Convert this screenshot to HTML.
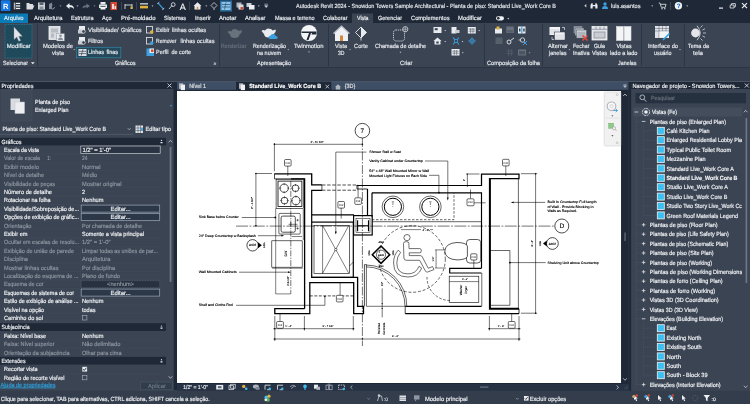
<!DOCTYPE html>
<html lang="pt"><head><meta charset="utf-8"><title>Autodesk Revit 2024 - Snowdon Towers Sample Architectural</title>
<style>
html,body{margin:0;padding:0;background:#3b4453;overflow:hidden}
svg{display:block;font-family:"Liberation Sans",sans-serif;text-rendering:geometricPrecision;will-change:transform}
</style></head><body>
<svg width="750" height="404" viewBox="0 0 750 404">
<rect x="0" y="0" width="750" height="404" fill="#3b4453" />
<rect x="0" y="0" width="750" height="23" fill="#1e2836" />
<rect x="0" y="23" width="750" height="44" fill="#3b4453" />
<rect x="0" y="67" width="750" height="14" fill="#343e4d" />
<line x1="0" y1="67.5" x2="750" y2="67.5" stroke="#2b3442" stroke-width="1" />
<rect x="0.8" y="0.3" width="9.6" height="10.8" fill="#1478e6" rx="1.2"/>
<text x="3.1" y="8.7" font-size="7.6" fill="#fff" font-weight="bold" >R</text>
<rect x="13.8" y="2.6" width="1.6" height="6.8" fill="#aeb4bc" />
<rect x="16" y="2.8" width="4.2" height="1.3" fill="#eef0f3" />
<rect x="16" y="5.3" width="4.2" height="1.3" fill="#eef0f3" />
<rect x="16" y="7.8" width="4.2" height="1.3" fill="#eef0f3" />
<path d="M26.5,9.5 L26.5,3 L29,3 L30,4 L33,4 L33,5.5 L34.5,5.5 L32.5,9.5 Z" fill="#d9dce0" stroke="none" stroke-width="1" />
<rect x="38" y="2.5" width="7" height="7" fill="#cfd3d8" />
<rect x="39.5" y="2.5" width="4" height="2.5" fill="#59616d" />
<rect x="39.5" y="6.5" width="4" height="3" fill="#8a919b" />
<path d="M49,9 L49,4 L52,2.5 L52,9 Z" fill="#7d8590" stroke="none" stroke-width="1" />
<path d="M52.5,5 a2,2 0 1,0 2,2" fill="none" stroke="#8a919b" stroke-width="1" />
<path d="M59.5,5.5 L61.5,5.5 L60.5,6.8 Z" fill="#9aa1ab" stroke="none" stroke-width="1" />
<path d="M66,6 L69.5,3 L69.5,5 Q74,5 74,9 Q72.5,7 69.5,7 L69.5,9 Z" fill="#e8ebef" stroke="none" stroke-width="1" />
<path d="M76.5,5.5 L78.5,5.5 L77.5,6.8 Z" fill="#d0d4da" stroke="none" stroke-width="1" />
<path d="M90,6 L86.5,3.5 L86.5,5.2 Q82.5,5.2 82.5,8.5 Q84,7 86.5,7 L86.5,8.5 Z" fill="#69717d" stroke="none" stroke-width="1" />
<path d="M93.5,5.5 L95.5,5.5 L94.5,6.8 Z" fill="#8a919b" stroke="none" stroke-width="1" />
<rect x="100.5" y="2" width="5" height="2.5" fill="#e8ebef" />
<rect x="99" y="4.5" width="8" height="3.5" fill="#dfe2e6" />
<rect x="100.5" y="7" width="5" height="2.5" fill="#f4f5f7" />
<rect x="100.5" y="6" width="5" height="0.8" fill="#39424f" />
<rect x="110.5" y="2" width="6.5" height="8" fill="#d9492f" />
<rect x="112" y="4" width="2" height="5" fill="#f6d9d2" />
<rect x="114.5" y="6" width="1.5" height="3" fill="#f6d9d2" />
<line x1="121.5" y1="2" x2="121.5" y2="10" stroke="#4a5361" stroke-width="0.7" />
<path d="M125,4 L125,9 M132,4 L132,9 M125,5 L132,5" fill="none" stroke="#d9dce0" stroke-width="0.9" />
<rect x="130.5" y="6.5" width="2" height="2.5" fill="#e0b23c" />
<line x1="136.5" y1="2" x2="136.5" y2="10" stroke="#4a5361" stroke-width="0.7" />
<rect x="140" y="3.2" width="8" height="1.3" fill="#d9dce0" />
<rect x="140" y="5.8" width="8" height="2.6" fill="#e0b23c" />
<path d="M151.5,5.5 L153.5,5.5 L152.5,6.8 Z" fill="#d0d4da" stroke="none" stroke-width="1" />
<path d="M158,2.8 L163.5,9.2" fill="none" stroke="#3aa0e0" stroke-width="1.3" />
<path d="M157.3,3.8 L159.3,2.2 M162.3,9.8 L164.3,8.2" fill="none" stroke="#d9dce0" stroke-width="0.8" />
<path d="M169,9 L172,5.5" fill="none" stroke="#d9dce0" stroke-width="0.9" />
<circle cx="173.2" cy="4.6" r="1.9" fill="none" stroke="#d9dce0" stroke-width="0.9"/>
<text x="179.8" y="9.6" font-size="9" fill="#f0f2f4" stroke="#f0f2f4" stroke-width="0.16" >A</text>
<line x1="189.5" y1="2" x2="189.5" y2="10" stroke="#4a5361" stroke-width="0.7" />
<path d="M193.5,6 L197.5,2.3 L201.5,6 L200.5,6 L200.5,9.5 L194.5,9.5 L194.5,6 Z" fill="#e8ebef" stroke="none" stroke-width="1" />
<rect x="196.7" y="6.8" width="1.6" height="2.7" fill="#d08a3a" />
<path d="M205.3,5.5 L207.3,5.5 L206.3,6.8 Z" fill="#d0d4da" stroke="none" stroke-width="1" />
<path d="M211,5.5 L214,2.5 L217,5.5 L214,8.5 Z" fill="none" stroke="#d9dce0" stroke-width="0.8" />
<line x1="214" y1="8.5" x2="214" y2="10" stroke="#d9dce0" stroke-width="0.8" />
<rect x="220" y="0.5" width="12" height="11" fill="#2a6f9e" />
<rect x="221.5" y="2" width="9" height="8" fill="#8fc3e6" />
<path d="M222,4.5 L230,4.5 M222,7 L230,7 M226,2.5 L224.5,9.5" fill="none" stroke="#1f4f74" stroke-width="0.7" />
<rect x="236.5" y="2.5" width="5" height="5" fill="#aeb4bc" />
<rect x="238.5" y="4.5" width="5" height="5" fill="#d9dce0" />
<rect x="240.5" y="7" width="2.5" height="2.5" fill="#d9492f" />
<rect x="246.5" y="3" width="5" height="4" fill="#c9cdd3" />
<rect x="249" y="5" width="5.5" height="4.5" fill="#eceef1" />
<path d="M257.8,5.5 L259.8,5.5 L258.8,6.8 Z" fill="#d0d4da" stroke="none" stroke-width="1" />
<path d="M264.3,4.2 L268.1,4.2 M264.7,5.7 L267.7,5.7 L266.2,7.6 Z" fill="#d0d4da" stroke="#d0d4da" stroke-width="0.6" />
<text x="296" y="7.6" font-size="6" fill="#e4e7eb" textLength="260" lengthAdjust="spacingAndGlyphs" stroke="#e4e7eb" stroke-width="0.16" >Autodesk Revit 2024 - Snowdon Towers Sample Architectural - Planta de piso: Standard Live_Work Core B</text>
<path d="M586.3,4 L584.3,5.8 L586.3,7.6 Z" fill="#d0d4da" stroke="none" stroke-width="1" />
<path d="M590.5,8.5 L590.5,5 L591.5,3.2 L592.7,3.2 L592.7,8.5 Z M597.5,8.5 L597.5,5 L596.5,3.2 L595.3,3.2 L595.3,8.5 Z M592.7,5 L595.3,5 L595.3,6.3 L592.7,6.3 Z" fill="#e8ebef" stroke="none" stroke-width="1" />
<circle cx="605" cy="4" r="1.7" fill="#3aa0e0"/>
<path d="M602,9 Q602,6 605,6 Q608,6 608,9 Z" fill="#3aa0e0" stroke="none" stroke-width="1" />
<text x="611" y="7.6" font-size="6" fill="#e4e7eb" textLength="29.5" lengthAdjust="spacingAndGlyphs" stroke="#e4e7eb" stroke-width="0.16" >luis.asantos</text>
<path d="M651.2,5.5 L653.2,5.5 L652.2,6.8 Z" fill="#d0d4da" stroke="none" stroke-width="1" />
<path d="M658.8,3 L660,3 L661.3,7.3 L665.3,7.3 L666,4.3 L660.6,4.3" fill="none" stroke="#e8ebef" stroke-width="0.8" />
<circle cx="662" cy="8.8" r="0.7" fill="#e8ebef"/><circle cx="664.8" cy="8.8" r="0.7" fill="#e8ebef"/>
<line x1="670.5" y1="2" x2="670.5" y2="10" stroke="#4a5361" stroke-width="0.7" />
<circle cx="678.4" cy="5.8" r="3.7" fill="#f0f2f4"/>
<text x="676.8" y="8" font-size="6.2" fill="#1b6fd0" font-weight="bold" stroke="#1b6fd0" stroke-width="0.16" >?</text>
<path d="M686.2,5.5 L688.2,5.5 L687.2,6.8 Z" fill="#d0d4da" stroke="none" stroke-width="1" />
<rect x="719" y="7.5" width="4" height="1.2" fill="#e8ebef" />
<path d="M730.2,5 L734,5 L734,8 L730.2,8 Z M731.5,5 L731.5,3.6 L735.4,3.6 L735.4,6.8 L734,6.8" fill="none" stroke="#e8ebef" stroke-width="0.8" />
<path d="M742,3.2 L747,8.2 M747,3.2 L742,8.2" fill="none" stroke="#f4f5f7" stroke-width="1.1" />
<rect x="0" y="13.5" width="28" height="9.5" fill="#0b7bb8" />
<rect x="352" y="13.5" width="21" height="9.5" fill="#3b4453" />
<text x="4" y="20.2" font-size="6" fill="#eef0f3" textLength="19.5" lengthAdjust="spacingAndGlyphs" stroke="#eef0f3" stroke-width="0.16" >Arquivo</text>
<text x="34" y="20.2" font-size="6" fill="#eef0f3" textLength="28.5" lengthAdjust="spacingAndGlyphs" stroke="#eef0f3" stroke-width="0.16" >Arquitetura</text>
<text x="71" y="20.2" font-size="6" fill="#eef0f3" textLength="22.5" lengthAdjust="spacingAndGlyphs" stroke="#eef0f3" stroke-width="0.16" >Estrutura</text>
<text x="102" y="20.2" font-size="6" fill="#eef0f3" textLength="9.5" lengthAdjust="spacingAndGlyphs" stroke="#eef0f3" stroke-width="0.16" >Aço</text>
<text x="121" y="20.2" font-size="6" fill="#eef0f3" textLength="34.5" lengthAdjust="spacingAndGlyphs" stroke="#eef0f3" stroke-width="0.16" >Pré-moldado</text>
<text x="164" y="20.2" font-size="6" fill="#eef0f3" textLength="22" lengthAdjust="spacingAndGlyphs" stroke="#eef0f3" stroke-width="0.16" >Sistemas</text>
<text x="195" y="20.2" font-size="6" fill="#eef0f3" textLength="16" lengthAdjust="spacingAndGlyphs" stroke="#eef0f3" stroke-width="0.16" >Inserir</text>
<text x="219" y="20.2" font-size="6" fill="#eef0f3" textLength="17.5" lengthAdjust="spacingAndGlyphs" stroke="#eef0f3" stroke-width="0.16" >Anotar</text>
<text x="245" y="20.2" font-size="6" fill="#eef0f3" textLength="20.5" lengthAdjust="spacingAndGlyphs" stroke="#eef0f3" stroke-width="0.16" >Analisar</text>
<text x="275" y="20.2" font-size="6" fill="#eef0f3" textLength="39.5" lengthAdjust="spacingAndGlyphs" stroke="#eef0f3" stroke-width="0.16" >Massa e terreno</text>
<text x="323" y="20.2" font-size="6" fill="#eef0f3" textLength="24.5" lengthAdjust="spacingAndGlyphs" stroke="#eef0f3" stroke-width="0.16" >Colaborar</text>
<text x="357" y="20.2" font-size="6" fill="#eef0f3" textLength="11.5" lengthAdjust="spacingAndGlyphs" stroke="#eef0f3" stroke-width="0.16" >Vista</text>
<text x="378" y="20.2" font-size="6" fill="#eef0f3" textLength="24" lengthAdjust="spacingAndGlyphs" stroke="#eef0f3" stroke-width="0.16" >Gerenciar</text>
<text x="411" y="20.2" font-size="6" fill="#eef0f3" textLength="38.5" lengthAdjust="spacingAndGlyphs" stroke="#eef0f3" stroke-width="0.16" >Complementos</text>
<text x="458" y="20.2" font-size="6" fill="#eef0f3" textLength="24" lengthAdjust="spacingAndGlyphs" stroke="#eef0f3" stroke-width="0.16" >Modificar</text>
<rect x="496" y="16.2" width="8" height="4.2" fill="#eef0f3" rx="2.1"/>
<circle cx="498.3" cy="18.3" r="1.3" fill="#1f2937"/>
<path d="M507.3,18.1 L509.3,18.1 L508.3,19.400000000000002 Z" fill="#d0d4da" stroke="none" stroke-width="1" />
<rect x="5" y="24.5" width="27" height="33.5" fill="#1f4a5c" stroke="#2f88a8" stroke-width="0.7" stroke-dasharray="0.8 0.8"/>
<path d="M14,27 L14,39.5 L16.8,37 L18.8,41.3 L20.6,40.4 L18.7,36.3 L22.3,36.3 Z" fill="#e3e5e8" stroke="#8a8f98" stroke-width="0.4" />
<text x="6.7" y="48" font-size="6" fill="#e8ebef" textLength="24" lengthAdjust="spacingAndGlyphs" stroke="#e8ebef" stroke-width="0.16" >Modificar</text>
<text x="3" y="65" font-size="6" fill="#e8ebef" textLength="25" lengthAdjust="spacingAndGlyphs" stroke="#e8ebef" stroke-width="0.16" >Selecionar</text>
<path d="M30.9,62.15 L34.699999999999996,62.15 L32.8,64.35 Z" fill="#eef0f3" stroke="none" stroke-width="1" />
<line x1="37.5" y1="24" x2="37.5" y2="66" stroke="#2c3543" stroke-width="1" />
<rect x="49" y="26.5" width="11" height="13" fill="#d9dce0" stroke="#f4f5f7" stroke-width="0.8"/>
<rect x="51" y="28.5" width="7" height="4" fill="#b7bcc4" />
<rect x="51" y="33.5" width="3" height="4" fill="#b7bcc4" />
<rect x="56.5" y="33.5" width="8" height="7.5" fill="#e8ebef" stroke="#6b7380" stroke-width="0.6" stroke-dasharray="1 0.7"/>
<circle cx="60.5" cy="35.8" r="1.3" fill="#8a919b"/>
<path d="M58,40 Q58,37.6 60.5,37.6 Q63,37.6 63,40 Z" fill="#8a919b" stroke="none" stroke-width="1" />
<text x="43" y="48" font-size="6" fill="#e8ebef" textLength="30" lengthAdjust="spacingAndGlyphs" stroke="#e8ebef" stroke-width="0.16" >Modelos de</text>
<text x="52" y="55" font-size="6" fill="#e8ebef" textLength="12" lengthAdjust="spacingAndGlyphs" stroke="#e8ebef" stroke-width="0.16" >vista</text>
<path d="M73.3,49.15 L75.10000000000001,49.15 L74.2,50.35 Z" fill="#d0d4da" stroke="none" stroke-width="1" />
<rect x="79" y="26" width="6" height="5" fill="#e8ebef" />
<rect x="78" y="29.5" width="5" height="4" fill="#c9cdd3" />
<circle cx="83.5" cy="31.5" r="1.8" fill="#3b4453" stroke="#e8ebef" stroke-width="0.7"/>
<text x="88" y="32.2" font-size="6" fill="#e8ebef" textLength="30.5" lengthAdjust="spacingAndGlyphs" stroke="#e8ebef" stroke-width="0.16" >Visibilidade/</text>
<text x="121" y="32.2" font-size="6" fill="#e8ebef" textLength="20.5" lengthAdjust="spacingAndGlyphs" stroke="#e8ebef" stroke-width="0.16" >Gráficos</text>
<rect x="79" y="37" width="6" height="5" fill="#e8ebef" />
<rect x="78" y="40.5" width="5" height="4" fill="#c9cdd3" />
<circle cx="83.5" cy="42.5" r="1.8" fill="#3b4453" stroke="#e8ebef" stroke-width="0.7"/>
<text x="88" y="43.2" font-size="6" fill="#e8ebef" textLength="15" lengthAdjust="spacingAndGlyphs" stroke="#e8ebef" stroke-width="0.16" >Filtros</text>
<rect x="76.3" y="47.3" width="44.5" height="10.5" fill="#25495a" stroke="#2f88a8" stroke-width="0.7"/>
<rect x="78.5" y="49" width="8" height="7" fill="#dfe2e6" />
<path d="M79,51.3 L86,51.3 M79,53.6 L86,53.6 M83,49.3 L81.2,55.7" fill="none" stroke="#3b4453" stroke-width="0.7" />
<text x="88" y="54.2" font-size="6" fill="#e8ebef" textLength="16" lengthAdjust="spacingAndGlyphs" stroke="#e8ebef" stroke-width="0.16" >Linhas</text>
<text x="106.5" y="54.2" font-size="6" fill="#e8ebef" textLength="11.5" lengthAdjust="spacingAndGlyphs" stroke="#e8ebef" stroke-width="0.16" >finas</text>
<rect x="146.5" y="26.5" width="6" height="6.5" fill="none" stroke="#e8ebef" stroke-width="0.8"/>
<circle cx="151.7" cy="32.0" r="1.8" fill="#e0b23c"/>
<text x="156" y="32.2" font-size="6" fill="#e8ebef" textLength="13.5" lengthAdjust="spacingAndGlyphs" stroke="#e8ebef" stroke-width="0.16" >Exibir</text>
<text x="172" y="32.2" font-size="6" fill="#e8ebef" textLength="34" lengthAdjust="spacingAndGlyphs" stroke="#e8ebef" stroke-width="0.16" >linhas ocultas</text>
<rect x="146.5" y="37.5" width="6" height="6.5" fill="none" stroke="#e8ebef" stroke-width="0.8"/>
<circle cx="151.7" cy="43.0" r="1.8" fill="#3aa0e0"/>
<text x="156" y="43.2" font-size="6" fill="#e8ebef" textLength="20.5" lengthAdjust="spacingAndGlyphs" stroke="#e8ebef" stroke-width="0.16" >Remover</text>
<text x="180.5" y="43.2" font-size="6" fill="#e8ebef" textLength="34" lengthAdjust="spacingAndGlyphs" stroke="#e8ebef" stroke-width="0.16" >linhas ocultas</text>
<rect x="146.5" y="48.5" width="7.5" height="7.5" fill="#3aa0e0" />
<rect x="149.5" y="48.5" width="4.5" height="4.5" fill="#e8ebef" />
<rect x="151" y="49.5" width="2.5" height="2.5" fill="#d9492f" />
<text x="156" y="54.2" font-size="6" fill="#e8ebef" textLength="12.5" lengthAdjust="spacingAndGlyphs" stroke="#e8ebef" stroke-width="0.16" >Perfil</text>
<text x="171.5" y="54.2" font-size="6" fill="#e8ebef" textLength="19.5" lengthAdjust="spacingAndGlyphs" stroke="#e8ebef" stroke-width="0.16" >de corte</text>
<text x="115" y="65" font-size="6" fill="#e8ebef" textLength="20.5" lengthAdjust="spacingAndGlyphs" stroke="#e8ebef" stroke-width="0.16" >Gráficos</text>
<text x="213.5" y="64.6" font-size="5" fill="#c9cdd3" stroke="#c9cdd3" stroke-width="0.16" >»</text>
<line x1="219.5" y1="24" x2="219.5" y2="66" stroke="#2c3543" stroke-width="1" />
<path d="M227.5,32 Q229,30.5 231,31.5 Q233,28 236.5,29.5 Q238,29.5 238.5,31 L241.5,30 Q242.5,32.5 239.5,34.5 Q239,38 234.5,38 Q230.5,38 230,34.5 Z" fill="#69717d" stroke="none" stroke-width="1" />
<text x="221" y="48" font-size="6" fill="#69717d" textLength="25.5" lengthAdjust="spacingAndGlyphs" stroke="#69717d" stroke-width="0.16" >Renderizar</text>
<path d="M261.5,31 Q263,29.5 265,30.5 Q267,27.5 270.5,29 Q272,29 272.5,30.5 L275.5,29.5 Q276.5,32 273.5,34 Q273,37.5 268.5,37.5 Q264.5,37.5 264,34 Z" fill="#e8ebef" stroke="none" stroke-width="1" />
<path d="M270,39 Q268.5,39 268.5,37.3 Q268.5,35.8 270.3,35.8 Q271,33.8 273.3,34 Q275.5,34 275.8,36 Q277.8,36 277.8,37.6 Q277.8,39 276,39 Z" fill="#3aa0e0" stroke="none" stroke-width="1" />
<text x="253" y="48" font-size="6" fill="#e8ebef" textLength="33" lengthAdjust="spacingAndGlyphs" stroke="#e8ebef" stroke-width="0.16" >Renderização</text>
<text x="257" y="55" font-size="6" fill="#e8ebef" textLength="24" lengthAdjust="spacingAndGlyphs" stroke="#e8ebef" stroke-width="0.16" >na nuvem</text>
<path d="M287.40000000000003,49.15 L289.2,49.15 L288.3,50.35 Z" fill="#d0d4da" stroke="none" stroke-width="1" />
<circle cx="309" cy="33" r="8" fill="#f4f5f7"/>
<path d="M301.5,31.5 L316.5,31.5 L316.5,33 L311,33 L308.5,40 L306.5,40 L309,33 L301.5,33 Z" fill="#1f2937" stroke="none" stroke-width="1" />
<path d="M312,33 L316.5,33 L316.5,34.5 L311.5,34.5 Z" fill="#1f2937" stroke="none" stroke-width="1" />
<text x="294" y="48" font-size="6" fill="#e8ebef" textLength="29.5" lengthAdjust="spacingAndGlyphs" stroke="#e8ebef" stroke-width="0.16" >Twinmotion</text>
<path d="M308.1,51.55 L309.9,51.55 L309,52.75 Z" fill="#d0d4da" stroke="none" stroke-width="1" />
<text x="257" y="65" font-size="6" fill="#e8ebef" textLength="34" lengthAdjust="spacingAndGlyphs" stroke="#e8ebef" stroke-width="0.16" >Apresentação</text>
<line x1="328.5" y1="24" x2="328.5" y2="66" stroke="#2c3543" stroke-width="1" />
<path d="M333.5,33.5 L341.5,26 L349.5,33.5 L348,33.5 L348,41 L335,41 L335,33.5 Z" fill="#eef0f3" stroke="none" stroke-width="1" />
<path d="M333.5,33.5 L341.5,26 L349.5,33.5" fill="none" stroke="#b7bcc4" stroke-width="1.2" />
<rect x="340" y="35.5" width="3" height="5.5" fill="#d08a3a" />
<text x="335" y="48" font-size="6" fill="#e8ebef" textLength="12" lengthAdjust="spacingAndGlyphs" stroke="#e8ebef" stroke-width="0.16" >Vista</text>
<text x="338" y="55" font-size="6" fill="#e8ebef" textLength="6.5" lengthAdjust="spacingAndGlyphs" stroke="#e8ebef" stroke-width="0.16" >3D</text>
<path d="M349.1,49.15 L350.9,49.15 L350,50.35 Z" fill="#d0d4da" stroke="none" stroke-width="1" />
<path d="M355.5,32.5 L361,27 L366.5,32.5 L361,38 Z" fill="none" stroke="#e8ebef" stroke-width="0.9" />
<path d="M361,27 L366.5,32.5 L361,38 Z" fill="#e8ebef" stroke="none" stroke-width="1" />
<line x1="361" y1="38" x2="361" y2="40.5" stroke="#e8ebef" stroke-width="0.9" />
<text x="354" y="48" font-size="6" fill="#e8ebef" textLength="14" lengthAdjust="spacingAndGlyphs" stroke="#e8ebef" stroke-width="0.16" >Corte</text>
<rect x="393.5" y="30" width="11" height="11" fill="none" rx="2.5" stroke="#e8ebef" stroke-width="0.8" stroke-dasharray="1.2 0.8"/>
<circle cx="405.3" cy="29.2" r="2.6" fill="#3b4453" stroke="#e8ebef" stroke-width="0.7"/>
<path d="M402.7,29.2 L407.9,29.2 M405.3,26.6 L405.3,31.8" fill="none" stroke="#e8ebef" stroke-width="0.5" />
<text x="375" y="48" font-size="6" fill="#e8ebef" textLength="51" lengthAdjust="spacingAndGlyphs" stroke="#e8ebef" stroke-width="0.16" >Chamada de detalhe</text>
<path d="M399.6,51.75 L401.4,51.75 L400.5,52.95 Z" fill="#d0d4da" stroke="none" stroke-width="1" />
<rect x="433.5" y="27" width="8" height="6" fill="#e8ebef" />
<rect x="434.7" y="28.2" width="3" height="2" fill="#3b4453" />
<path d="M444.3,30.05 L446.09999999999997,30.05 L445.2,31.25 Z" fill="#d0d4da" stroke="none" stroke-width="1" />
<path d="M433.5,41.0 L437.5,37.5 L441.5,41.0 L440.5,41.0 L440.5,44.5 L434.5,44.5 L434.5,41.0 Z" fill="#e8ebef" stroke="none" stroke-width="1" />
<rect x="436.3" y="41.5" width="2.4" height="2" fill="#3b4453" />
<path d="M444.3,41.05 L446.09999999999997,41.05 L445.2,42.25 Z" fill="#d0d4da" stroke="none" stroke-width="1" />
<rect x="451.5" y="27" width="5" height="6.5" fill="#e8ebef" />
<rect x="455.0" y="30" width="4.5" height="3" fill="#c9cdd3" />
<path d="M453,37.5 L459,44.5 M459,37.5 L453,44.5" fill="none" stroke="#3aa0e0" stroke-width="1.1" />
<rect x="454.5" y="39.5" width="3" height="3" fill="#3b4453" stroke="#3aa0e0" stroke-width="0.8"/>
<path d="M461.6,41.05 L463.4,41.05 L462.5,42.25 Z" fill="#d0d4da" stroke="none" stroke-width="1" />
<rect x="451.5" y="49" width="8" height="6.5" fill="#e8ebef" />
<path d="M452.3,51.2 L458.7,51.2 M452.3,53.2 L458.7,53.2 M454.3,50 L454.3,55 M456.7,50 L456.7,55" fill="none" stroke="#3b4453" stroke-width="0.5" />
<path d="M461.90000000000003,52.349999999999994 L463.7,52.349999999999994 L462.8,53.55 Z" fill="#d0d4da" stroke="none" stroke-width="1" />
<rect x="467.8" y="27" width="8" height="6.5" fill="#e8ebef" />
<path d="M468.6,29.2 L475.0,29.2 M468.6,31.2 L475.0,31.2 M470.6,28 L470.6,33 M473.0,28 L473.0,33" fill="none" stroke="#3b4453" stroke-width="0.5" />
<path d="M478.3,30.05 L480.09999999999997,30.05 L479.2,31.25 Z" fill="#d0d4da" stroke="none" stroke-width="1" />
<circle cx="472" cy="41.0" r="2.2" fill="none" stroke="#3aa0e0" stroke-width="0.9"/>
<path d="M472,37.0 L472,45.0 M468,41.0 L476,41.0" fill="none" stroke="#3aa0e0" stroke-width="0.6" />
<text x="400" y="65" font-size="6" fill="#e8ebef" textLength="12.5" lengthAdjust="spacingAndGlyphs" stroke="#e8ebef" stroke-width="0.16" >Criar</text>
<line x1="484.5" y1="24" x2="484.5" y2="66" stroke="#2c3543" stroke-width="1" />
<rect x="495" y="28.5" width="7" height="5" fill="#e8ebef" />
<rect x="496.5" y="26.5" width="3" height="3" fill="#e0b23c" />
<rect x="506.3" y="26.5" width="7.5" height="6.5" fill="#69717d" />
<rect x="507.3" y="30.0" width="5.5" height="2.5" fill="#565f6c" />
<rect x="518" y="26.5" width="7.5" height="7" fill="#e8ebef" />
<rect x="521.2" y="26.5" width="1.2" height="7" fill="#3aa0e0" />
<rect x="519" y="28.5" width="1.5" height="3" fill="#3b4453" />
<rect x="523.2" y="28.5" width="1.5" height="3" fill="#3b4453" />
<rect x="495.5" y="37.5" width="7" height="6.5" fill="#565f6c" />
<circle cx="509.0" cy="42.0" r="2" fill="none" stroke="#e8ebef" stroke-width="0.9"/>
<path d="M510.5,40.5 L514.0,38.0" fill="none" stroke="#e8ebef" stroke-width="0.9" />
<circle cx="522.5" cy="40" r="2.2" fill="none" stroke="#e8ebef" stroke-width="0.8"/>
<path d="M523.0,41 L527.0,45 M527.0,41 L523.0,45" fill="none" stroke="#3aa0e0" stroke-width="1" />
<line x1="518.5" y1="40" x2="520.5" y2="40" stroke="#e8ebef" stroke-width="0.7" />
<path d="M506.5,51 L513.5,51 M506.5,53.5 L513.5,53.5 M508.5,49 L508.5,56 M511.3,49 L511.3,56" fill="none" stroke="#5a6370" stroke-width="0.6" />
<rect x="518" y="49.5" width="8" height="6" fill="#69717d" />
<rect x="519" y="51.0" width="6" height="3.5" fill="#4b5461" />
<path d="M528.6,52.349999999999994 L530.4,52.349999999999994 L529.5,53.55 Z" fill="#9aa1ab" stroke="none" stroke-width="1" />
<text x="487" y="65" font-size="6" fill="#e8ebef" textLength="53" lengthAdjust="spacingAndGlyphs" stroke="#e8ebef" stroke-width="0.16" >Composição da folha</text>
<line x1="542.5" y1="24" x2="542.5" y2="66" stroke="#2c3543" stroke-width="1" />
<rect x="549.5" y="27" width="10.5" height="8" fill="#f4f5f7" />
<rect x="550.3" y="29" width="9" height="5.2" fill="#dfe2e6" />
<rect x="554.5" y="32" width="10.5" height="8" fill="#f4f5f7" stroke="#3b4453" stroke-width="0.6"/>
<rect x="555.3" y="34.2" width="9" height="5" fill="#dfe2e6" />
<path d="M562,27.5 L564.5,27.5 L564.5,30 M552,37 L552,39.5 L554,39.5" fill="none" stroke="#e8ebef" stroke-width="0.7" />
<text x="548" y="48" font-size="6" fill="#e8ebef" textLength="20" lengthAdjust="spacingAndGlyphs" stroke="#e8ebef" stroke-width="0.16" >Alternar</text>
<text x="549" y="55" font-size="6" fill="#e8ebef" textLength="17.5" lengthAdjust="spacingAndGlyphs" stroke="#e8ebef" stroke-width="0.16" >janelas</text>
<path d="M568.6,49.15 L570.4,49.15 L569.5,50.35 Z" fill="#d0d4da" stroke="none" stroke-width="1" />
<rect x="573.5" y="26" width="9" height="7.5" fill="#9aa1ab" stroke="#3b4453" stroke-width="0.5"/>
<rect x="575" y="28" width="9" height="7.5" fill="#b7bcc4" stroke="#3b4453" stroke-width="0.5"/>
<rect x="576.5" y="30" width="10" height="8" fill="#c9cdd3" stroke="#565f6c" stroke-width="0.5"/>
<rect x="577.5" y="32" width="8" height="5" fill="#aeb4bc" />
<path d="M582.5,35.5 L587.5,40.5 M587.5,35.5 L582.5,40.5" fill="none" stroke="#e24a3b" stroke-width="1.5" />
<text x="573" y="48" font-size="6" fill="#e8ebef" textLength="16.5" lengthAdjust="spacingAndGlyphs" stroke="#e8ebef" stroke-width="0.16" >Fechar</text>
<text x="573" y="55" font-size="6" fill="#e8ebef" textLength="16.5" lengthAdjust="spacingAndGlyphs" stroke="#e8ebef" stroke-width="0.16" >Inativa</text>
<rect x="592" y="26.5" width="15" height="13.5" fill="#dfe2e6" stroke="#f4f5f7" stroke-width="0.8"/>
<path d="M592,29.3 L607,29.3 M596,26.5 L596,29.3 M600,26.5 L600,29.3 M604,26.5 L604,29.3" fill="none" stroke="#565f6c" stroke-width="0.5" />
<rect x="594" y="32" width="11" height="6" fill="#c9cdd3" stroke="#69717d" stroke-width="0.5"/>
<text x="594" y="48" font-size="6" fill="#e8ebef" textLength="11" lengthAdjust="spacingAndGlyphs" stroke="#e8ebef" stroke-width="0.16" >Guia</text>
<text x="592" y="55" font-size="6" fill="#e8ebef" textLength="15" lengthAdjust="spacingAndGlyphs" stroke="#e8ebef" stroke-width="0.16" >Vistas</text>
<rect x="616.5" y="26.5" width="6.8" height="14" fill="#f4f5f7" stroke="#dfe2e6" stroke-width="0.6"/>
<rect x="624.2" y="26.5" width="6.8" height="14" fill="#f4f5f7" stroke="#dfe2e6" stroke-width="0.6"/>
<text x="616.5" y="48" font-size="6" fill="#e8ebef" textLength="15" lengthAdjust="spacingAndGlyphs" stroke="#e8ebef" stroke-width="0.16" >Vistas</text>
<text x="610" y="55" font-size="6" fill="#e8ebef" textLength="27.5" lengthAdjust="spacingAndGlyphs" stroke="#e8ebef" stroke-width="0.16" >lado a lado</text>
<text x="618" y="65" font-size="6" fill="#e8ebef" textLength="18.5" lengthAdjust="spacingAndGlyphs" stroke="#e8ebef" stroke-width="0.16" >Janelas</text>
<line x1="641.5" y1="24" x2="641.5" y2="66" stroke="#2c3543" stroke-width="1" />
<rect x="655" y="26" width="14" height="12" fill="#dfe2e6" />
<path d="M655,28.5 L669,28.5 M655,31 L669,31 M659,26 L659,38 M662.5,26 L662.5,31 M666,26 L666,31" fill="none" stroke="#565f6c" stroke-width="0.5" />
<rect x="659.5" y="31.5" width="9" height="6" fill="#f4f5f7" />
<path d="M663,40 L669.5,33.5" fill="none" stroke="#2ea3e0" stroke-width="1.6" />
<text x="648" y="48" font-size="6" fill="#e8ebef" textLength="30" lengthAdjust="spacingAndGlyphs" stroke="#e8ebef" stroke-width="0.16" >Interface do</text>
<text x="654" y="55" font-size="6" fill="#e8ebef" textLength="17.5" lengthAdjust="spacingAndGlyphs" stroke="#e8ebef" stroke-width="0.16" >usuário</text>
<path d="M679.1,49.15 L680.9,49.15 L680,50.35 Z" fill="#d0d4da" stroke="none" stroke-width="1" />
<line x1="684.5" y1="24" x2="684.5" y2="66" stroke="#2c3543" stroke-width="1" />
<circle cx="695.5" cy="33" r="4.4" fill="#e3e5e8"/>
<path d="M697,25.8 Q703.5,33 697,40.2" fill="none" stroke="#e8ebef" stroke-width="0.8" />
<path d="M700.5,27.5 L702.5,25.5 M703,33 L706,33 M700.5,38.5 L702.5,40.5 M702.5,30 L705,28.8 M702.5,36 L705,37.2" fill="none" stroke="#e8ebef" stroke-width="0.7" />
<text x="688" y="48" font-size="6" fill="#e8ebef" textLength="21" lengthAdjust="spacingAndGlyphs" stroke="#e8ebef" stroke-width="0.16" >Tema da</text>
<text x="693" y="55" font-size="6" fill="#e8ebef" textLength="10" lengthAdjust="spacingAndGlyphs" stroke="#e8ebef" stroke-width="0.16" >tela</text>
<rect x="0" y="81" width="750" height="1" fill="#4a5463" />
<rect x="0" y="82" width="173.5" height="308" fill="#3b4453" />
<rect x="173.5" y="82" width="3.5" height="308" fill="#1e2836" />
<rect x="0" y="82" width="173.5" height="7" fill="#1e2836" />
<text x="1.5" y="87.6" font-size="6" fill="#f2f4f6" textLength="32" lengthAdjust="spacingAndGlyphs" stroke="#f2f4f6" stroke-width="0.16" >Propriedades</text>
<path d="M167.5,83.5 L171.5,87.5 M171.5,83.5 L167.5,87.5" fill="none" stroke="#e8ebef" stroke-width="0.8" />
<rect x="2" y="90" width="30" height="31" fill="#3f4857" stroke="#46505f" stroke-width="0.6"/>
<rect x="10.5" y="98.5" width="9.5" height="11.5" fill="#d9dce0" />
<rect x="15" y="102" width="9.5" height="11.5" fill="#eceef1" stroke="#c2c6cc" stroke-width="0.5"/>
<text x="35" y="104.1" font-size="6" fill="#f2f4f6" textLength="35" lengthAdjust="spacingAndGlyphs" stroke="#f2f4f6" stroke-width="0.16" >Planta de piso</text>
<text x="35" y="112" font-size="6" fill="#f2f4f6" textLength="33.5" lengthAdjust="spacingAndGlyphs" stroke="#f2f4f6" stroke-width="0.16" >Enlarged Plan</text>
<path d="M169.8,105.3 L172.2,105.3 L171,106.8 Z" fill="#4aa3d8" stroke="none" stroke-width="1" />
<text x="2.5" y="131.1" font-size="6" fill="#f2f4f6" textLength="103.5" lengthAdjust="spacingAndGlyphs" stroke="#f2f4f6" stroke-width="0.16" >Planta de piso: Standard Live_Work Core B</text>
<path d="M127.8,128.2 L129.2,129.8 L130.6,128.2" fill="none" stroke="#aeb4bc" stroke-width="0.8" />
<line x1="0" y1="134.4" x2="133" y2="134.4" stroke="#56606f" stroke-width="0.8" />
<rect x="135.5" y="125.5" width="7.5" height="7.5" fill="#dfe2e6" />
<path d="M135.5,128 L143,128 M135.5,130.5 L143,130.5 M138,125.5 L138,133 M140.5,125.5 L140.5,133" fill="none" stroke="#3b4453" stroke-width="0.5" />
<rect x="140.6" y="128.2" width="2.4" height="2.2" fill="#3aa0e0" />
<text x="145.5" y="131.1" font-size="6" fill="#f2f4f6" textLength="25.5" lengthAdjust="spacingAndGlyphs" stroke="#f2f4f6" stroke-width="0.16" >Editar tipo</text>
<rect x="0" y="137.8" width="166" height="7.6" fill="#1e2836" />
<text x="1.5" y="143.5" font-size="6" fill="#f2f4f6" textLength="20" lengthAdjust="spacingAndGlyphs" stroke="#f2f4f6" stroke-width="0.16" >Gráficos</text>
<path d="M160.6,141 L162.4,141 L161.5,139.6 Z M160.5,143.2 L162.5,143.2 L162.5,142 L160.5,142 Z" fill="#e8ebef" stroke="none" stroke-width="1" />
<path d="M168.7,142.3 L170.5,140.3 L172.3,142.3" fill="none" stroke="#c9cdd3" stroke-width="0.8" />
<line x1="3" y1="153.95000000000002" x2="161" y2="153.95000000000002" stroke="#434d5c" stroke-width="0.5" />
<line x1="3" y1="162.35000000000002" x2="161" y2="162.35000000000002" stroke="#434d5c" stroke-width="0.5" />
<line x1="3" y1="170.75000000000003" x2="161" y2="170.75000000000003" stroke="#434d5c" stroke-width="0.5" />
<line x1="3" y1="179.15" x2="161" y2="179.15" stroke="#434d5c" stroke-width="0.5" />
<line x1="3" y1="187.55" x2="161" y2="187.55" stroke="#434d5c" stroke-width="0.5" />
<line x1="3" y1="195.95000000000002" x2="161" y2="195.95000000000002" stroke="#434d5c" stroke-width="0.5" />
<line x1="3" y1="204.35000000000002" x2="161" y2="204.35000000000002" stroke="#434d5c" stroke-width="0.5" />
<line x1="3" y1="212.75000000000003" x2="161" y2="212.75000000000003" stroke="#434d5c" stroke-width="0.5" />
<line x1="3" y1="221.15" x2="161" y2="221.15" stroke="#434d5c" stroke-width="0.5" />
<line x1="3" y1="229.55000000000004" x2="161" y2="229.55000000000004" stroke="#434d5c" stroke-width="0.5" />
<line x1="3" y1="237.95000000000002" x2="161" y2="237.95000000000002" stroke="#434d5c" stroke-width="0.5" />
<line x1="3" y1="246.35000000000002" x2="161" y2="246.35000000000002" stroke="#434d5c" stroke-width="0.5" />
<line x1="3" y1="254.75000000000003" x2="161" y2="254.75000000000003" stroke="#434d5c" stroke-width="0.5" />
<line x1="3" y1="263.15" x2="161" y2="263.15" stroke="#434d5c" stroke-width="0.5" />
<line x1="3" y1="271.55" x2="161" y2="271.55" stroke="#434d5c" stroke-width="0.5" />
<line x1="3" y1="279.95" x2="161" y2="279.95" stroke="#434d5c" stroke-width="0.5" />
<line x1="3" y1="288.35" x2="161" y2="288.35" stroke="#434d5c" stroke-width="0.5" />
<line x1="3" y1="296.75" x2="161" y2="296.75" stroke="#434d5c" stroke-width="0.5" />
<line x1="3" y1="305.15" x2="161" y2="305.15" stroke="#434d5c" stroke-width="0.5" />
<line x1="3" y1="313.54999999999995" x2="161" y2="313.54999999999995" stroke="#434d5c" stroke-width="0.5" />
<line x1="3" y1="321.95" x2="161" y2="321.95" stroke="#434d5c" stroke-width="0.5" />
<line x1="3" y1="339.75" x2="161" y2="339.75" stroke="#434d5c" stroke-width="0.5" />
<line x1="3" y1="348.15" x2="161" y2="348.15" stroke="#434d5c" stroke-width="0.5" />
<line x1="3" y1="356.55" x2="161" y2="356.55" stroke="#434d5c" stroke-width="0.5" />
<line x1="3" y1="373.35" x2="161" y2="373.35" stroke="#434d5c" stroke-width="0.5" />
<line x1="3" y1="381.75" x2="161" y2="381.75" stroke="#434d5c" stroke-width="0.5" />
<line x1="80.3" y1="146" x2="80.3" y2="381" stroke="#434d5c" stroke-width="0.5" />
<text x="4" y="151.9" font-size="6" fill="#f2f4f6" textLength="35" lengthAdjust="spacingAndGlyphs" stroke="#f2f4f6" stroke-width="0.16" >Escala da vista</text>
<rect x="80.8" y="146.0" width="79.4" height="7.6" fill="#2b3442" stroke="#c9cdd3" stroke-width="0.7"/>
<text x="82.5" y="151.9" font-size="6" fill="#f2f4f6" textLength="28.5" lengthAdjust="spacingAndGlyphs" stroke="#f2f4f6" stroke-width="0.16" >1/2&quot; = 1&#x27;-0&quot;</text>
<text x="4" y="160.3" font-size="6" fill="#8e96a1" textLength="36" lengthAdjust="spacingAndGlyphs" stroke="#8e96a1" stroke-width="0.16" >Valor de escala</text>
<text x="82" y="160.3" font-size="6" fill="#8e96a1" textLength="5.5" lengthAdjust="spacingAndGlyphs" stroke="#8e96a1" stroke-width="0.16" >24</text>
<text x="47.2" y="160.3" font-size="6" fill="#8e96a1" textLength="3.6" lengthAdjust="spacingAndGlyphs" stroke="#8e96a1" stroke-width="0.16" >1:</text>
<text x="4" y="168.70000000000002" font-size="6" fill="#8e96a1" textLength="35" lengthAdjust="spacingAndGlyphs" stroke="#8e96a1" stroke-width="0.16" >Exibir modelo</text>
<text x="82" y="168.70000000000002" font-size="6" fill="#8e96a1" textLength="18.5" lengthAdjust="spacingAndGlyphs" stroke="#8e96a1" stroke-width="0.16" >Normal</text>
<text x="4" y="177.1" font-size="6" fill="#8e96a1" textLength="40" lengthAdjust="spacingAndGlyphs" stroke="#8e96a1" stroke-width="0.16" >Nível de detalhe</text>
<text x="82" y="177.1" font-size="6" fill="#8e96a1" textLength="15" lengthAdjust="spacingAndGlyphs" stroke="#8e96a1" stroke-width="0.16" >Médio</text>
<text x="4" y="185.5" font-size="6" fill="#8e96a1" textLength="51" lengthAdjust="spacingAndGlyphs" stroke="#8e96a1" stroke-width="0.16" >Visibilidade de peças</text>
<text x="82" y="185.5" font-size="6" fill="#8e96a1" textLength="39.5" lengthAdjust="spacingAndGlyphs" stroke="#8e96a1" stroke-width="0.16" >Mostrar original</text>
<text x="4" y="193.9" font-size="6" fill="#f2f4f6" textLength="48" lengthAdjust="spacingAndGlyphs" stroke="#f2f4f6" stroke-width="0.16" >Número de detalhe</text>
<text x="82" y="193.9" font-size="6" fill="#f2f4f6" textLength="3" lengthAdjust="spacingAndGlyphs" stroke="#f2f4f6" stroke-width="0.16" >2</text>
<text x="4" y="202.3" font-size="6" fill="#f2f4f6" textLength="46.6" lengthAdjust="spacingAndGlyphs" stroke="#f2f4f6" stroke-width="0.16" >Rotacionar na folha</text>
<text x="82" y="202.3" font-size="6" fill="#f2f4f6" textLength="21.5" lengthAdjust="spacingAndGlyphs" stroke="#f2f4f6" stroke-width="0.16" >Nenhum</text>
<text x="4" y="210.70000000000002" font-size="6" fill="#f2f4f6" textLength="75" lengthAdjust="spacingAndGlyphs" stroke="#f2f4f6" stroke-width="0.16" >Visibilidade/Sobreposição de...</text>
<rect x="81.2" y="205.10000000000002" width="78.5" height="7" fill="#2c3848" stroke="#9aa5b4" stroke-width="0.7"/>
<text x="120.6" y="210.70000000000002" font-size="6" fill="#f2f4f6" textLength="20" lengthAdjust="spacingAndGlyphs" text-anchor="middle" stroke="#f2f4f6" stroke-width="0.16" >Editar...</text>
<text x="4" y="219.1" font-size="6" fill="#f2f4f6" textLength="75" lengthAdjust="spacingAndGlyphs" stroke="#f2f4f6" stroke-width="0.16" >Opções de exibição de gráfic...</text>
<rect x="81.2" y="213.5" width="78.5" height="7" fill="#2c3848" stroke="#9aa5b4" stroke-width="0.7"/>
<text x="120.6" y="219.1" font-size="6" fill="#f2f4f6" textLength="20" lengthAdjust="spacingAndGlyphs" text-anchor="middle" stroke="#f2f4f6" stroke-width="0.16" >Editar...</text>
<text x="4" y="227.50000000000003" font-size="6" fill="#8e96a1" textLength="27.5" lengthAdjust="spacingAndGlyphs" stroke="#8e96a1" stroke-width="0.16" >Orientação</text>
<text x="82" y="227.50000000000003" font-size="6" fill="#8e96a1" textLength="60" lengthAdjust="spacingAndGlyphs" stroke="#8e96a1" stroke-width="0.16" >Por chamada de detalhe</text>
<text x="4" y="235.9" font-size="6" fill="#f2f4f6" textLength="23.5" lengthAdjust="spacingAndGlyphs" stroke="#f2f4f6" stroke-width="0.16" >Exibir em</text>
<text x="82" y="235.9" font-size="6" fill="#f2f4f6" textLength="62" lengthAdjust="spacingAndGlyphs" stroke="#f2f4f6" stroke-width="0.16" >Somente a vista principal</text>
<text x="4" y="244.3" font-size="6" fill="#8e96a1" textLength="75" lengthAdjust="spacingAndGlyphs" stroke="#8e96a1" stroke-width="0.16" >Ocultar em escalas de resolu...</text>
<text x="82" y="244.3" font-size="6" fill="#8e96a1" textLength="28.5" lengthAdjust="spacingAndGlyphs" stroke="#8e96a1" stroke-width="0.16" >1/2&quot; = 1&#x27;-0&quot;</text>
<text x="4" y="252.70000000000002" font-size="6" fill="#8e96a1" textLength="70" lengthAdjust="spacingAndGlyphs" stroke="#8e96a1" stroke-width="0.16" >Exibição de união de parede</text>
<text x="82" y="252.70000000000002" font-size="6" fill="#8e96a1" textLength="76" lengthAdjust="spacingAndGlyphs" stroke="#8e96a1" stroke-width="0.16" >Limpar todas as uniões de par...</text>
<text x="4" y="261.1" font-size="6" fill="#8e96a1" textLength="24" lengthAdjust="spacingAndGlyphs" stroke="#8e96a1" stroke-width="0.16" >Disciplina</text>
<text x="82" y="261.1" font-size="6" fill="#8e96a1" textLength="28.5" lengthAdjust="spacingAndGlyphs" stroke="#8e96a1" stroke-width="0.16" >Arquitetura</text>
<text x="4" y="269.50000000000006" font-size="6" fill="#8e96a1" textLength="54.5" lengthAdjust="spacingAndGlyphs" stroke="#8e96a1" stroke-width="0.16" >Mostrar linhas ocultas</text>
<text x="82" y="269.50000000000006" font-size="6" fill="#8e96a1" textLength="33" lengthAdjust="spacingAndGlyphs" stroke="#8e96a1" stroke-width="0.16" >Por disciplina</text>
<text x="4" y="277.90000000000003" font-size="6" fill="#8e96a1" textLength="74.5" lengthAdjust="spacingAndGlyphs" stroke="#8e96a1" stroke-width="0.16" >Localização do esquema de ...</text>
<text x="82" y="277.90000000000003" font-size="6" fill="#8e96a1" textLength="38" lengthAdjust="spacingAndGlyphs" stroke="#8e96a1" stroke-width="0.16" >Plano de fundo</text>
<text x="4" y="286.30000000000007" font-size="6" fill="#8e96a1" textLength="39.5" lengthAdjust="spacingAndGlyphs" stroke="#8e96a1" stroke-width="0.16" >Esquema de cor</text>
<rect x="81.2" y="280.70000000000005" width="78.5" height="7" fill="#273140" stroke="#5a6575" stroke-width="0.6" stroke-dasharray="1 0.6"/>
<text x="120.6" y="286.30000000000007" font-size="6" fill="#8e96a1" textLength="27" lengthAdjust="spacingAndGlyphs" text-anchor="middle" stroke="#8e96a1" stroke-width="0.16" >&lt;nenhum&gt;</text>
<text x="4" y="294.70000000000005" font-size="6" fill="#f2f4f6" textLength="70" lengthAdjust="spacingAndGlyphs" stroke="#f2f4f6" stroke-width="0.16" >Esquemas de sistema de cor</text>
<rect x="81.2" y="289.1" width="78.5" height="7" fill="#2c3848" stroke="#9aa5b4" stroke-width="0.7"/>
<text x="120.6" y="294.70000000000005" font-size="6" fill="#f2f4f6" textLength="20" lengthAdjust="spacingAndGlyphs" text-anchor="middle" stroke="#f2f4f6" stroke-width="0.16" >Editar...</text>
<text x="4" y="303.1" font-size="6" fill="#f2f4f6" textLength="74.5" lengthAdjust="spacingAndGlyphs" stroke="#f2f4f6" stroke-width="0.16" >Estilo de exibição de análise ...</text>
<text x="82" y="303.1" font-size="6" fill="#f2f4f6" textLength="21.5" lengthAdjust="spacingAndGlyphs" stroke="#f2f4f6" stroke-width="0.16" >Nenhum</text>
<text x="4" y="311.5" font-size="6" fill="#f2f4f6" textLength="40" lengthAdjust="spacingAndGlyphs" stroke="#f2f4f6" stroke-width="0.16" >Visível na opção</text>
<text x="82" y="311.5" font-size="6" fill="#f2f4f6" textLength="13.5" lengthAdjust="spacingAndGlyphs" stroke="#f2f4f6" stroke-width="0.16" >todas</text>
<text x="4" y="319.90000000000003" font-size="6" fill="#f2f4f6" textLength="39" lengthAdjust="spacingAndGlyphs" stroke="#f2f4f6" stroke-width="0.16" >Caminho do sol</text>
<rect x="82.5" y="315.6" width="4.4" height="4.4" fill="none" stroke="#aeb4bc" stroke-width="0.6"/>
<text x="4" y="337.70000000000005" font-size="6" fill="#f2f4f6" textLength="42" lengthAdjust="spacingAndGlyphs" stroke="#f2f4f6" stroke-width="0.16" >Faixa: Nível base</text>
<text x="82" y="337.70000000000005" font-size="6" fill="#f2f4f6" textLength="21.5" lengthAdjust="spacingAndGlyphs" stroke="#f2f4f6" stroke-width="0.16" >Nenhum</text>
<text x="4" y="346.1" font-size="6" fill="#8e96a1" textLength="50.5" lengthAdjust="spacingAndGlyphs" stroke="#8e96a1" stroke-width="0.16" >Faixa: Nível superior</text>
<text x="82" y="346.1" font-size="6" fill="#8e96a1" textLength="38.5" lengthAdjust="spacingAndGlyphs" stroke="#8e96a1" stroke-width="0.16" >Não delimitado</text>
<text x="4" y="354.50000000000006" font-size="6" fill="#8e96a1" textLength="65.5" lengthAdjust="spacingAndGlyphs" stroke="#8e96a1" stroke-width="0.16" >Orientação da subjacência</text>
<text x="82" y="354.50000000000006" font-size="6" fill="#8e96a1" textLength="39.5" lengthAdjust="spacingAndGlyphs" stroke="#8e96a1" stroke-width="0.16" >Olhar para cima</text>
<text x="4" y="371.30000000000007" font-size="6" fill="#f2f4f6" textLength="33.5" lengthAdjust="spacingAndGlyphs" stroke="#f2f4f6" stroke-width="0.16" >Recortar vista</text>
<rect x="82.3" y="366.80000000000007" width="4.8" height="4.8" fill="#e8ebef" />
<path d="M83.2,369.20000000000005 L84.3,370.50000000000006 L86.3,367.80000000000007" fill="none" stroke="#1f2937" stroke-width="0.9" />
<text x="4" y="379.70000000000005" font-size="6" fill="#f2f4f6" textLength="60.5" lengthAdjust="spacingAndGlyphs" stroke="#f2f4f6" stroke-width="0.16" >Região de recorte visível</text>
<rect x="82.5" y="375.40000000000003" width="4.4" height="4.4" fill="none" stroke="#aeb4bc" stroke-width="0.6"/>
<rect x="0" y="323.20000000000005" width="166" height="7.8" fill="#1e2836" />
<text x="1.5" y="329.30000000000007" font-size="6" fill="#f2f4f6" textLength="28" lengthAdjust="spacingAndGlyphs" stroke="#f2f4f6" stroke-width="0.16" >Subjacência</text>
<path d="M160.6,326.6 L162.4,326.6 L161.5,325.20000000000005 Z M160.5,328.80000000000007 L162.5,328.80000000000007 L162.5,327.6 L160.5,327.6 Z" fill="#e8ebef" stroke="none" stroke-width="1" />
<rect x="0" y="356.8" width="166" height="7.8" fill="#1e2836" />
<text x="1.5" y="362.90000000000003" font-size="6" fill="#f2f4f6" textLength="24" lengthAdjust="spacingAndGlyphs" stroke="#f2f4f6" stroke-width="0.16" >Extensões</text>
<path d="M160.6,360.2 L162.4,360.2 L161.5,358.8 Z M160.5,362.40000000000003 L162.5,362.40000000000003 L162.5,361.2 L160.5,361.2 Z" fill="#e8ebef" stroke="none" stroke-width="1" />
<rect x="166" y="146" width="7.5" height="235" fill="#3b4453" />
<rect x="169.7" y="147" width="1.7" height="135" fill="#6e7a8c" />
<path d="M168.7,376.3 L170.5,378.3 L172.3,376.3" fill="none" stroke="#c9cdd3" stroke-width="0.8" />
<rect x="0" y="381" width="173.5" height="9" fill="#3b4453" />
<text x="0.5" y="386.6" font-size="6" fill="#2ea3e0" textLength="55" lengthAdjust="spacingAndGlyphs" stroke="#2ea3e0" stroke-width="0.16" text-decoration="underline">Ajuda de propriedades</text>
<rect x="140.3" y="382" width="32" height="7.8" fill="#323d4c" stroke="#4b5667" stroke-width="0.7"/>
<text x="157" y="387.9" font-size="6" fill="#6e7886" textLength="17.8" lengthAdjust="spacingAndGlyphs" text-anchor="middle" stroke="#6e7886" stroke-width="0.16" >Aplicar</text>
<rect x="177" y="81.7" width="451.5" height="9.3" fill="#3e4e64" />
<line x1="177" y1="82" x2="628.5" y2="82" stroke="#4b5b72" stroke-width="0.6" />
<rect x="236" y="81.7" width="95.3" height="9.3" fill="#1e2836" />
<rect x="176.6" y="89.8" width="452" height="1.4" fill="#1e2836" />
<rect x="179" y="83.3" width="4.2" height="5.5" fill="#aeb4bc" />
<rect x="180.8" y="84.6" width="4.2" height="5.5" fill="#eef0f3" />
<text x="189.2" y="88.4" font-size="6" fill="#dfe2e6" textLength="16.8" lengthAdjust="spacingAndGlyphs" stroke="#dfe2e6" stroke-width="0.16" >Nível 1</text>
<rect x="239" y="83.3" width="4.2" height="5.5" fill="#aeb4bc" />
<rect x="240.8" y="84.6" width="4.2" height="5.5" fill="#eef0f3" />
<text x="249.2" y="88.4" font-size="6" fill="#ffffff" textLength="72" lengthAdjust="spacingAndGlyphs" font-weight="bold" stroke="#ffffff" stroke-width="0.16" >Standard Live_Work Core B</text>
<path d="M325.5,84.8 L329.1,88.4 M329.1,84.8 L325.5,88.4" fill="none" stroke="#e8ebef" stroke-width="0.7" />
<path d="M335,87 L338,84.2 L341,87 L340.2,87 L340.2,89.5 L335.8,89.5 L335.8,87 Z" fill="#aeb4bc" stroke="none" stroke-width="1" />
<text x="344.7" y="88.4" font-size="6" fill="#dfe2e6" textLength="10.6" lengthAdjust="spacingAndGlyphs" stroke="#dfe2e6" stroke-width="0.16" >{3D}</text>
<path d="M623.3,84.6 L626.7,84.6 M623.5,85.8 L626.5,85.8 L625,87.6 Z" fill="#c9cdd3" stroke="#c9cdd3" stroke-width="0.5" />
<rect x="177" y="91" width="444" height="292.6" fill="#ffffff" />
<rect x="604.2" y="92" width="17" height="54" fill="#f1f1f1" rx="1.5" stroke="#d2d2d2" stroke-width="0.6"/>
<circle cx="617.2" cy="94.7" r="1" fill="none" stroke="#9a9a9a" stroke-width="0.4"/><circle cx="617.2" cy="142.8" r="1" fill="none" stroke="#9a9a9a" stroke-width="0.4"/>
<circle cx="611.5" cy="106.3" r="4.3" fill="#fafafa" stroke="#b4b8be" stroke-width="1.2"/><circle cx="611.5" cy="106.3" r="1.8" fill="#f1f1f1" stroke="#c4c8ce" stroke-width="0.6"/>
<path d="M613.3,110.5 L617.3,110.5 M615.8,109 L617.5,110.5 L615.8,112" fill="none" stroke="#2f8fd8" stroke-width="0.8" />
<path d="M611.3,115.2 L613.5,115.2 L612.4,116.8 Z" fill="#6a6a6a" stroke="none" stroke-width="1" />
<line x1="606" y1="118.1" x2="619.5" y2="118.1" stroke="#d2d2d2" stroke-width="0.5" />
<rect x="608.6" y="123.2" width="5" height="5" fill="#8fc98a" stroke="#6aa866" stroke-width="0.4"/>
<circle cx="614" cy="128.2" r="1.6" fill="#f1f1f1" stroke="#8a8a8a" stroke-width="0.5"/>
<line x1="615.2" y1="129.5" x2="616.6" y2="131" stroke="#8a8a8a" stroke-width="0.6" />
<path d="M611.3,135.1 L613.5,135.1 L612.4,136.7 Z" fill="#6a6a6a" stroke="none" stroke-width="1" />
<g fill="none" stroke="#000" stroke-linecap="butt">
<circle cx="362.4" cy="130.7" r="7.3" stroke-width="0.7" fill="#fff"/>
<text x="362.4" y="133" font-size="6.4" fill="#000" stroke="#000" stroke-width="0.12" text-anchor="middle">7</text>
<path d="M362.4,138 L362.4,346" stroke-width="0.55" stroke-dasharray="9 1.5 1.5 1.5"/>
<circle cx="561.8" cy="226" r="7" stroke-width="0.7" fill="#fff"/>
<text x="561.8" y="228.2" font-size="6.6" fill="#000" stroke="#000" stroke-width="0.12" text-anchor="middle">D</text>
<path d="M236,226.1 L554.8,226.1" stroke-width="0.55" stroke-dasharray="12 1.5 1.8 1.5"/>
<path d="M274.4,144.3 L362.4,144.3" stroke-width="0.55"/>
<path d="M274.4,143 L274.4,171.2" stroke-width="0.55"/>
<circle cx="274.4" cy="144.3" r="0.8" fill="#000" stroke="none"/>
<circle cx="362.4" cy="144.3" r="0.8" fill="#000" stroke="none"/>
<text x="317" y="142.6" font-size="2.8" fill="#000" stroke="#000" stroke-width="0.12" text-anchor="middle">4&#x27; - 11 1/4&quot;</text>
<path d="M335.8,233 L335.8,152.1 L366.5,152.1" stroke-width="0.55"/>
<path d="M335.8,234.5 L334.9,231.5 L336.7,231.5 Z" fill="#000" stroke="none"/>
<text x="369.3" y="153.3" font-size="3.4" fill="#000" stroke="#000" stroke-width="0.12" textLength="31.5" lengthAdjust="spacingAndGlyphs">Shower Stall w Seat</text>
<text x="369.3" y="161.9" font-size="3.4" fill="#000" stroke="#000" stroke-width="0.12" textLength="53.5" lengthAdjust="spacingAndGlyphs">Vanity Cabinet under Countertop</text>
<path d="M425,161 L447.8,161 L447.8,198" stroke-width="0.55"/>
<path d="M447.8,200.5 L446.9,197.5 L448.7,197.5 Z" fill="#000" stroke="none"/>
<text x="369.3" y="172.1" font-size="3.4" fill="#000" stroke="#000" stroke-width="0.12" textLength="59.8" lengthAdjust="spacingAndGlyphs">54&quot; x 48&quot; Wall Mounted Mirror w Wall</text>
<text x="369.3" y="176.5" font-size="3.4" fill="#000" stroke="#000" stroke-width="0.12" textLength="57.6" lengthAdjust="spacingAndGlyphs">Mounted Light Fixtures on Each Side</text>
<path d="M429,175.3 L438.9,175.3 L438.9,192.4" stroke-width="0.55"/>
<circle cx="438.9" cy="192.6" r="0.9" fill="#000" stroke="none"/>
<path d="M287.8,166 L287.8,176" stroke-width="0.55"/>
<rect x="284.5" y="159.5" width="6.6" height="6.6" rx="1" stroke-width="0.6" fill="#fff"/>
<text x="287.8" y="163.8" font-size="2.6" fill="#000" stroke="none" text-anchor="middle">F02</text>
<path d="M505.8,166 L505.8,176" stroke-width="0.55"/>
<rect x="502.5" y="159.29999999999998" width="6.6" height="6.6" rx="1" stroke-width="0.6" fill="#fff"/>
<text x="505.8" y="163.6" font-size="2.6" fill="#000" stroke="none" text-anchor="middle">F02</text>
<path d="M255.9,173.5 L255.9,226" stroke-width="0.55"/>
<path d="M255.9,173.5 L272,173.5" stroke-width="0.55"/>
<circle cx="255.9" cy="173.5" r="0.8" fill="#000" stroke="none"/>
<circle cx="255.9" cy="225.8" r="0.8" fill="#000" stroke="none"/>
<text x="253.2" y="203" font-size="2.8" fill="#000" stroke="#000" stroke-width="0.12" transform="rotate(-90 253.2 203)" text-anchor="middle">2&#x27; - 4 3/4&quot;</text>
<path d="M274.3,173.9 L311.7,173.9 L311.7,184.8 L321.9,184.8" stroke-width="1.3"/>
<path d="M274.5,173.9 L274.5,178.9 L304.6,178.9" stroke-width="0.7"/>
<path d="M291,178.9 L304.6,178.9 L304.6,308.7" stroke-width="1.3"/>
<path d="M321.9,184.8 L321.9,190.4" stroke-width="0.7"/>
<path d="M321.9,190.4 L311.7,190.4 L311.7,222" stroke-width="1.2"/>
<path d="M322,185 L358,185" stroke-width="0.7" stroke-dasharray="3.5 1.6"/>
<path d="M322,190.2 L358,190.2" stroke-width="0.7" stroke-dasharray="3.5 1.6"/>
<rect x="276.1" y="179.2" width="27.2" height="29.1" stroke-width="0.6"/>
<rect x="278" y="181.1" width="23.9" height="25.3" stroke-width="0.8"/>
<circle cx="284.2" cy="188.2" r="4.2" stroke-width="0.7"/>
<path d="M279.2,188.2 L281.2,188.2 M287.2,188.2 L289.2,188.2 M284.2,183.2 L284.2,185.2 M284.2,191.2 L284.2,193.2" stroke-width="0.5"/>
<circle cx="295.5" cy="188.2" r="3.4" stroke-width="0.7"/>
<path d="M291.3,188.2 L293.3,188.2 M297.7,188.2 L299.7,188.2 M295.5,183.99999999999997 L295.5,185.99999999999997 M295.5,190.4 L295.5,192.4" stroke-width="0.5"/>
<circle cx="284.5" cy="200.6" r="3.4" stroke-width="0.7"/>
<path d="M280.3,200.6 L282.3,200.6 M286.7,200.6 L288.7,200.6 M284.5,196.39999999999998 L284.5,198.39999999999998 M284.5,202.8 L284.5,204.8" stroke-width="0.5"/>
<circle cx="295.9" cy="200.6" r="4.2" stroke-width="0.7"/>
<path d="M290.9,200.6 L292.9,200.6 M298.9,200.6 L300.9,200.6 M295.9,195.6 L295.9,197.6 M295.9,203.6 L295.9,205.6" stroke-width="0.5"/>
<path d="M275.7,208.3 L275.7,293.9 L290.8,293.9" stroke-width="0.5"/>
<path d="M290.8,181 L290.8,293.9" stroke-width="0.55" stroke-dasharray="6 1.3 1.3 1.3"/>
<path d="M303.3,209 L303.3,240" stroke-width="0.55"/>
<rect x="278.9" y="213.4" width="21.3" height="20.7" rx="1" stroke-width="0.6"/>
<rect x="281.1" y="216.1" width="14.2" height="16.1" rx="1.6" stroke-width="0.7"/>
<path d="M288.5,224.3 L297.5,224.3 M290.8,222 L290.8,226.6 M297.6,219 L297.6,221.4 M296.4,220.2 L298.8,220.2 M297.6,227.2 L297.6,229.6 M296.4,228.4 L298.8,228.4" stroke-width="0.5"/>
<path d="M291.6,236.5 L302,236.5" stroke-width="0.5"/>
<text x="198.8" y="218.4" font-size="3.4" fill="#000" stroke="#000" stroke-width="0.12" textLength="40" lengthAdjust="spacingAndGlyphs">Sink Base below Counter</text>
<path d="M241.8,217.5 L275.5,217.5" stroke-width="0.55"/>
<circle cx="275.3" cy="217.5" r="0.9" fill="#000" stroke="none"/>
<text x="198.8" y="236.8" font-size="3.4" fill="#000" stroke="#000" stroke-width="0.12" textLength="57" lengthAdjust="spacingAndGlyphs">24&quot; Deep Countertop w Backsplash</text>
<path d="M258,235.7 L282,235.7" stroke-width="0.55"/>
<path d="M284.2,235.7 L281.4,234.8 L281.4,236.6 Z" fill="#000" stroke="none"/>
<text x="198.8" y="273.3" font-size="3.4" fill="#000" stroke="#000" stroke-width="0.12" textLength="37.7" lengthAdjust="spacingAndGlyphs">Wall Mounted Cabinets</text>
<path d="M239,272.2 L288.6,272.2" stroke-width="0.55"/>
<path d="M290.8,272.2 L288,271.3 L288,273.1 Z" fill="#000" stroke="none"/>
<text x="198.8" y="306" font-size="3.4" fill="#000" stroke="#000" stroke-width="0.12" textLength="34" lengthAdjust="spacingAndGlyphs">Shelf and Cloths Rod</text>
<path d="M236,305.3 L324.9,305.3 L324.9,295.7" stroke-width="0.55"/>
<circle cx="324.9" cy="296.6" r="0.7" fill="#000" stroke="none"/>
<circle cx="252.6" cy="245.3" r="5.7" stroke-width="0.7" fill="#fff"/>
<text x="252.6" y="246.4" font-size="3.1" fill="#000" stroke="#000" stroke-width="0.12" text-anchor="middle">A402</text>
<path d="M258,242.3 L261.8,245.3 L258,248.3 Z" fill="#000" stroke="none"/>
<text x="265.3" y="245.3" font-size="2.4" fill="#000" stroke="#000" stroke-width="0.12" transform="rotate(-90 265.3 245.3)" text-anchor="middle">1/2in</text>
<rect x="271.8" y="240.8" width="30.4" height="26.4" stroke-width="0.6"/>
<path d="M272.1,268.2 L302.8,268.2" stroke-width="0.5"/>
<text x="287.4" y="253.7" font-size="3.4" fill="#000" stroke="#000" stroke-width="0.12" transform="rotate(-90 287.4 253.7)" text-anchor="middle">DW</text>
<text x="289.4" y="281" font-size="2.6" fill="#000" stroke="#000" stroke-width="0.12" transform="rotate(-90 289.4 281)" text-anchor="middle">2&#x27;-6 1/4&quot;</text>
<path d="M311.7,214.9 L354,214.9" stroke-width="1.1"/>
<path d="M341.2,208 L341.2,218.6" stroke-width="0.55"/>
<rect x="337.9" y="201.5" width="6.6" height="6.6" rx="1" stroke-width="0.6" fill="#fff"/>
<text x="341.2" y="205.8" font-size="2.6" fill="#000" stroke="none" text-anchor="middle">F02</text>
<path d="M358.1,197.6 L358.1,186" stroke-width="0.55"/>
<rect x="354.8" y="197.79999999999998" width="6.6" height="6.6" rx="1" stroke-width="0.6" fill="#fff"/>
<text x="358.1" y="202.1" font-size="2.6" fill="#000" stroke="none" text-anchor="middle">F02</text>
<rect x="311.7" y="222.1" width="41.6" height="55.3" stroke-width="1.2"/>
<rect x="314" y="225.5" width="35.5" height="47.8" stroke-width="0.6"/>
<path d="M322.6,225.5 L322.6,273.3 M322.6,225.5 L348.8,273.3 M348.8,225.5 L322.6,273.3" stroke-width="0.5"/>
<circle cx="335.8" cy="249.6" r="1.2" stroke-width="0.5" fill="#fff"/>
<path d="M349.5,266 L353.3,262" stroke-width="0.5"/>
<rect x="353.6" y="215.6" width="18.6" height="19.4" stroke-width="1.2"/>
<rect x="356" y="218.3" width="14" height="14.3" stroke-width="0.5"/>
<path d="M357.6,220.2 L357.6,231.3 M368.5,220.2 L368.5,231.3 M357.6,225.8 L368.5,225.8" stroke-width="1.1"/>
<path d="M304.6,308.7 L274.8,308.7 L274.8,313.7 L309.8,313.7 L309.8,282.6 L353.7,282.6 L353.7,313.7 L363.5,313.7 L363.5,306.3 L357.6,306.3 L357.6,277.4 L311.4,277.4" stroke-width="1.3"/>
<path d="M309.8,295.9 L353.7,295.9" stroke-width="0.7" stroke-dasharray="3 1.5"/>
<path d="M340.1,282.5 L340.1,296" stroke-width="0.55"/>
<rect x="336.4" y="295.3" width="6.6" height="6.6" rx="1" stroke-width="0.6" fill="#fff"/>
<text x="339.7" y="299.6" font-size="2.6" fill="#000" stroke="none" text-anchor="middle">F02</text>
<path d="M280,313.7 L280,321.5" stroke-width="0.55"/>
<rect x="276.6" y="321.5" width="6.8" height="6.8" rx="1" stroke-width="0.6" fill="#fff"/>
<text x="280" y="325.9" font-size="2.6" fill="#000" stroke="none" text-anchor="middle">F02</text>
<path d="M274.8,316 L274.8,341 M304.4,316 L304.4,330.5 M353.3,316 L353.3,330.5" stroke-width="0.55"/>
<path d="M273.3,328.7 L354.5,328.7" stroke-width="0.55"/>
<circle cx="274.8" cy="328.7" r="0.7" fill="#000" stroke="none"/>
<circle cx="304.4" cy="328.7" r="0.7" fill="#000" stroke="none"/>
<circle cx="353.3" cy="328.7" r="0.7" fill="#000" stroke="none"/>
<text x="288.5" y="327.4" font-size="2.6" fill="#000" stroke="#000" stroke-width="0.12" text-anchor="middle">1&#x27; - 4&quot;</text>
<text x="328" y="327.4" font-size="2.6" fill="#000" stroke="#000" stroke-width="0.12" text-anchor="middle">3&#x27; - 7 1/4&quot;</text>
<path d="M273.3,339 L520.5,339" stroke-width="0.55"/>
<circle cx="274.8" cy="339" r="0.7" fill="#000" stroke="none"/>
<circle cx="362.4" cy="339" r="0.7" fill="#000" stroke="none"/>
<circle cx="519" cy="339" r="0.7" fill="#000" stroke="none"/>
<text x="395.4" y="337.4" font-size="2.6" fill="#000" stroke="#000" stroke-width="0.12" text-anchor="middle">4&#x27; - 4&quot;</text>
<path d="M364.4,264.6 L364.4,306.3" stroke-width="0.7"/>
<path d="M366.4,264.6 L366.4,306.3" stroke-width="0.6"/>
<path d="M364.4,264.6 L366.4,264.6" stroke-width="0.6"/>
<path d="M366.4,306.3 L405.2,306.3" stroke-width="0.55"/>
<path d="M382.2,288.4 L382.2,317.4" stroke-width="0.55"/>
<circle cx="382.2" cy="303.6" r="0.6" fill="#000" stroke="none"/>
<circle cx="382.2" cy="308.5" r="0.6" fill="#000" stroke="none"/>
<text x="383.1" y="284" font-size="2.6" fill="#000" stroke="#000" stroke-width="0.12" transform="rotate(-90 383.1 284)" text-anchor="middle">1/2&quot;</text>
<text x="379.9" y="328.6" font-size="3" fill="#000" stroke="#000" stroke-width="0.12" transform="rotate(-90 379.9 328.6)" text-anchor="middle">Polished</text>
<text x="385" y="328.6" font-size="3" fill="#000" stroke="#000" stroke-width="0.12" transform="rotate(-90 385 328.6)" text-anchor="middle">Concrete</text>
<path d="M366,265 A41,41 0 0 1 406.8,306.4" stroke-width="0.6"/>
<path d="M366,266.8 A39.4,39.4 0 0 1 405,306.4" stroke-width="0.6"/>
<path d="M427,277 A23,23 0 0 0 450,300.5" stroke-width="0.6" stroke-dasharray="2.6 1.6"/>
<path d="M381,246 L389.7,254.7 L381,263.4 L372.3,254.7 Z" stroke-width="1.5" fill="#fff" stroke-linejoin="miter"/>
<circle cx="381" cy="254.7" r="4.6" stroke-width="0.6" fill="#fff"/>
<text x="381" y="255.7" font-size="2.6" fill="#000" stroke="#000" stroke-width="0.12" text-anchor="middle">A402</text>
<text x="381" y="243.4" font-size="2.4" fill="#000" stroke="#000" stroke-width="0.12" text-anchor="middle">4/5in</text>
<text x="381" y="267.2" font-size="2.4" fill="#000" stroke="#000" stroke-width="0.12" text-anchor="middle">3/5in</text>
<text x="369.6" y="253" font-size="2.4" fill="#000" stroke="#000" stroke-width="0.12" transform="rotate(-90 369.6 253)" text-anchor="middle">2/5in</text>
<text x="393.8" y="253" font-size="2.4" fill="#000" stroke="#000" stroke-width="0.12" transform="rotate(-90 393.8 253)" text-anchor="middle">1/5in</text>
<path d="M356.6,185.5 L481.5,185.5" stroke-width="1.15"/>
<path d="M357,185.5 L357,189 L367.5,189" stroke-width="0.8"/>
<path d="M367.5,189 L367.5,215.6" stroke-width="1.2"/>
<path d="M372,192.9 L481.5,192.9 L481.5,268.3" stroke-width="1.15"/>
<path d="M372,192.8 L372,216.4" stroke-width="1.2"/>
<path d="M481.5,186 L481.5,174 L519,174 L519,178.7 L489.4,178.7" stroke-width="1.25"/>
<path d="M489.9,178 L489.9,308.7 L519,308.7" stroke-width="2"/>
<path d="M518.4,178.7 L518.4,308.7" stroke-width="0.6"/>
<path d="M519,308.7 L519,313.7" stroke-width="0.8"/>
<path d="M467.4,174 L467.4,186 M466,174 L479.5,174" stroke-width="0.55"/>
<circle cx="467.4" cy="174" r="0.6" fill="#000" stroke="none"/>
<circle cx="467.4" cy="186" r="0.6" fill="#000" stroke="none"/>
<text x="464.8" y="180" font-size="2.4" fill="#000" stroke="#000" stroke-width="0.12" transform="rotate(-90 464.8 180)" text-anchor="middle">5&quot;</text>
<path d="M470.5,198.6 L470.5,189.5 M474,202.8 L485.7,202.8" stroke-width="0.55"/>
<rect x="467.0" y="198.8" width="7" height="7" rx="1" stroke-width="0.6" fill="#fff"/>
<text x="470.5" y="203.3" font-size="2.6" fill="#000" stroke="none" text-anchor="middle">F02</text>
<path d="M520.9,173.7 L537.2,173.7 M520.9,313.2 L537.2,313.2 M535.6,173.7 L535.6,313.2" stroke-width="0.55"/>
<circle cx="535.6" cy="173.7" r="0.7" fill="#000" stroke="none"/>
<circle cx="535.6" cy="313.2" r="0.7" fill="#000" stroke="none"/>
<text x="533" y="243.5" font-size="2.6" fill="#000" stroke="#000" stroke-width="0.12" transform="rotate(-90 533 243.5)" text-anchor="middle">4&#x27; - 4&quot;</text>
<path d="M513,202.4 L545.2,202.4" stroke-width="0.55"/>
<path d="M510.8,202.4 L513.6,201.5 L513.6,203.3 Z" fill="#000" stroke="none"/>
<text x="547.5" y="203.2" font-size="3.4" fill="#000" stroke="#000" stroke-width="0.12" textLength="49" lengthAdjust="spacingAndGlyphs">Built In Countertop Full length</text>
<text x="547.5" y="207.7" font-size="3.4" fill="#000" stroke="#000" stroke-width="0.12" textLength="46" lengthAdjust="spacingAndGlyphs">of Wall - Provide Blocking in</text>
<text x="547.5" y="212.2" font-size="3.4" fill="#000" stroke="#000" stroke-width="0.12" textLength="29.5" lengthAdjust="spacingAndGlyphs">Walls as Required.</text>
<path d="M509.9,262.6 L545.7,262.6" stroke-width="0.55"/>
<circle cx="509.9" cy="262.6" r="0.9" fill="#000" stroke="none"/>
<text x="547.5" y="264.1" font-size="3.4" fill="#000" stroke="#000" stroke-width="0.12" textLength="51.3" lengthAdjust="spacingAndGlyphs">Shelving Unit above Countertop</text>
<circle cx="552.4" cy="243.5" r="5.9" stroke-width="0.7" fill="#fff"/>
<text x="552.4" y="244.6" font-size="3.1" fill="#000" stroke="#000" stroke-width="0.12" text-anchor="middle">A402</text>
<path d="M546.8,240.5 L543,243.5 L546.8,246.5 Z" fill="#000" stroke="none"/>
<text x="540.6" y="243.5" font-size="2.4" fill="#000" stroke="#000" stroke-width="0.12" transform="rotate(-90 540.6 243.5)" text-anchor="middle">1/2in</text>
<path d="M489.4,250.5 L509.9,250.5 L509.9,305.3 L490.6,305.3" stroke-width="0.6"/>
<path d="M372,221.7 L481.5,221.7" stroke-width="0.6"/>
<path d="M372,219.7 L454,219.7 L454,193" stroke-width="0.6" stroke-dasharray="2.5 1.5"/>
<circle cx="392.9" cy="206.8" r="10.8" stroke-width="0.6"/>
<circle cx="392.9" cy="206.8" r="8.6" stroke-width="1"/>
<path d="M392.9,202.3 L392.9,205 M391.7,201.8 L394.09999999999997,201.8" stroke-width="0.45"/>
<circle cx="392.9" cy="206.4" r="0.4" fill="#000" stroke="none"/>
<circle cx="430.4" cy="206.8" r="10.8" stroke-width="0.6"/>
<circle cx="430.4" cy="206.8" r="8.6" stroke-width="1"/>
<path d="M430.4,202.3 L430.4,205 M429.2,201.8 L431.59999999999997,201.8" stroke-width="0.45"/>
<circle cx="430.4" cy="206.4" r="0.4" fill="#000" stroke="none"/>
<path d="M401,229.6 L421,229.6 M430,229.6 L433,229.6" stroke-width="0.5"/>
<text x="425.7" y="230.6" font-size="2.6" fill="#000" stroke="#000" stroke-width="0.12" text-anchor="middle">4&#x27; - 0&quot;</text>
<circle cx="412" cy="259" r="33.3" stroke-width="0.6" stroke-dasharray="3 1.8"/>
<g stroke-width="0.65" fill="#fff" stroke="#222">
<circle cx="407" cy="237.6" r="3.1"/>
<path d="M398.2,250.2 Q393.6,255 393.6,263 Q393.6,277 407.9,277 Q418.5,277 421.6,268 L419,266.3 Q416,273.9 407.9,273.9 Q396.8,273.9 396.8,263 Q396.8,256.5 400.6,252.4 Z"/>
<path d="M403.5,243.4 Q403.5,241.6 406.2,241.6 Q408.9,241.6 408.9,243.4 L409,248.6 L419.8,248.6 Q421.3,248.6 421.3,250.7 Q421.3,252.8 419.8,252.8 L409.2,252.8 L409.3,255.6 L420.3,255.6 Q421.8,255.6 422.4,257 L428.2,268.2 L432.6,266.6 L434,269.6 L427.6,272 Q426.2,272.5 425.5,271.1 L419.6,260.3 L406.3,260.3 Q404,260.3 403.9,258 Z"/>
</g>
<rect x="466.5" y="239.5" width="14.2" height="23.5" rx="3.2" stroke-width="0.65" fill="#fff"/>
<path d="M444.8,251.2 Q445.5,243 457,242.5 Q466,242.6 467.4,246 L467.4,256.4 Q466,259.8 457,259.9 Q445.5,259.4 444.8,251.2 Z" stroke-width="0.65" fill="#fff"/>
<path d="M473.8,260 L473.8,268" stroke-width="0.55"/>
<rect x="470.7" y="253.79999999999998" width="6.2" height="6.2" rx="1" stroke-width="0.6" fill="#fff"/>
<text x="473.8" y="257.9" font-size="2.6" fill="#000" stroke="none" text-anchor="middle">F02</text>
<path d="M436.1,249.9 L436.1,268 M435,249.9 L444.8,249.9 M435,268 L446,268" stroke-width="0.5"/>
<text x="433.6" y="259" font-size="2.4" fill="#000" stroke="#000" stroke-width="0.12" transform="rotate(-90 433.6 259)" text-anchor="middle">1&#x27;-6&quot;</text>
<path d="M481.5,268.3 L449.7,268.3 L449.7,273 L481.5,273" stroke-width="1.2"/>
<rect x="449.2" y="276.2" width="29.6" height="26.4" stroke-width="0.6"/>
<path d="M449.2,281.6 L478.8,281.6" stroke-width="0.5"/>
<text x="462.4" y="290" font-size="3.1" fill="#000" stroke="#000" stroke-width="0.12" transform="rotate(-90 462.4 290)" text-anchor="middle">Washer</text>
<text x="467.2" y="290" font-size="3.1" fill="#000" stroke="#000" stroke-width="0.12" transform="rotate(-90 467.2 290)" text-anchor="middle">Dryer</text>
<text x="465" y="280" font-size="2.2" fill="#000" stroke="#000" stroke-width="0.12" text-anchor="middle">2&#x27; - 4&quot;</text>
<path d="M481.8,273 L481.8,306.4" stroke-width="0.6"/>
<path d="M405.2,306.4 L481.5,306.4" stroke-width="1.3"/>
<path d="M405.2,313.7 L519,313.7" stroke-width="1.3"/>
<path d="M405.2,306.4 L405.2,313.7" stroke-width="0.7"/>
<path d="M489.4,316 L489.4,330.5 M519,316 L519,341" stroke-width="0.55"/>
<path d="M488,328.7 L520.5,328.7" stroke-width="0.55"/>
<circle cx="489.4" cy="328.7" r="0.7" fill="#000" stroke="none"/>
<circle cx="519" cy="328.7" r="0.7" fill="#000" stroke="none"/>
<text x="501" y="327.4" font-size="2.6" fill="#000" stroke="#000" stroke-width="0.12" text-anchor="middle">1&#x27; - 4&quot;</text>
<path d="M511.7,313.7 L511.7,321.5" stroke-width="0.55"/>
<rect x="508.3" y="321.5" width="6.8" height="6.8" rx="1" stroke-width="0.6" fill="#fff"/>
<text x="511.7" y="325.9" font-size="2.6" fill="#000" stroke="none" text-anchor="middle">F02</text>
</g>
<rect x="628.5" y="82" width="3" height="309" fill="#1e2836" />
<rect x="631.3" y="82" width="118.7" height="309" fill="#3b4453" />
<rect x="631.3" y="82" width="118.7" height="7" fill="#1e2836" />
<text x="632.5" y="87.6" font-size="6" fill="#f2f4f6" textLength="107" lengthAdjust="spacingAndGlyphs" stroke="#f2f4f6" stroke-width="0.16" >Navegador de projeto - Snowdon Towers...</text>
<path d="M744.8,83.5 L748.8,87.5 M748.8,83.5 L744.8,87.5" fill="none" stroke="#e8ebef" stroke-width="0.8" />
<rect x="635.5" y="93" width="110.5" height="10.3" fill="#263140" />
<circle cx="642.3" cy="97.3" r="2.4" fill="none" stroke="#c9cdd3" stroke-width="0.8"/>
<line x1="644" y1="99.2" x2="646.3" y2="101.6" stroke="#c9cdd3" stroke-width="0.9" />
<text x="651" y="100.2" font-size="6" fill="#69717d" textLength="24" lengthAdjust="spacingAndGlyphs" stroke="#69717d" stroke-width="0.16" >Pesquisar</text>
<rect x="633" y="107.5" width="109" height="9" fill="#434d5c" />
<line x1="636.3" y1="117" x2="636.3" y2="386" stroke="#5a6472" stroke-width="0.5" stroke-dasharray="0.7 0.9"/>
<line x1="636.5" y1="121.4" x2="641" y2="121.4" stroke="#5a6472" stroke-width="0.5" stroke-dasharray="0.7 0.9"/>
<line x1="636.5" y1="224.8" x2="641" y2="224.8" stroke="#5a6472" stroke-width="0.5" stroke-dasharray="0.7 0.9"/>
<line x1="636.5" y1="234.2" x2="641" y2="234.2" stroke="#5a6472" stroke-width="0.5" stroke-dasharray="0.7 0.9"/>
<line x1="636.5" y1="243.6" x2="641" y2="243.6" stroke="#5a6472" stroke-width="0.5" stroke-dasharray="0.7 0.9"/>
<line x1="636.5" y1="253.0" x2="641" y2="253.0" stroke="#5a6472" stroke-width="0.5" stroke-dasharray="0.7 0.9"/>
<line x1="636.5" y1="262.4" x2="641" y2="262.4" stroke="#5a6472" stroke-width="0.5" stroke-dasharray="0.7 0.9"/>
<line x1="636.5" y1="271.8" x2="641" y2="271.8" stroke="#5a6472" stroke-width="0.5" stroke-dasharray="0.7 0.9"/>
<line x1="636.5" y1="281.20000000000005" x2="641" y2="281.20000000000005" stroke="#5a6472" stroke-width="0.5" stroke-dasharray="0.7 0.9"/>
<line x1="636.5" y1="290.6" x2="641" y2="290.6" stroke="#5a6472" stroke-width="0.5" stroke-dasharray="0.7 0.9"/>
<line x1="636.5" y1="300.0" x2="641" y2="300.0" stroke="#5a6472" stroke-width="0.5" stroke-dasharray="0.7 0.9"/>
<line x1="636.5" y1="309.4" x2="641" y2="309.4" stroke="#5a6472" stroke-width="0.5" stroke-dasharray="0.7 0.9"/>
<line x1="636.5" y1="318.8" x2="641" y2="318.8" stroke="#5a6472" stroke-width="0.5" stroke-dasharray="0.7 0.9"/>
<line x1="636.5" y1="384.6" x2="641" y2="384.6" stroke="#5a6472" stroke-width="0.5" stroke-dasharray="0.7 0.9"/>
<line x1="643.6" y1="124.4" x2="643.6" y2="215.4" stroke="#5a6472" stroke-width="0.5" stroke-dasharray="0.7 0.9"/>
<line x1="643.6" y1="321.8" x2="643.6" y2="375.2" stroke="#5a6472" stroke-width="0.5" stroke-dasharray="0.7 0.9"/>
<line x1="643.8" y1="130.8" x2="655.5" y2="130.8" stroke="#5a6472" stroke-width="0.5" stroke-dasharray="0.7 0.9"/>
<line x1="643.8" y1="140.2" x2="655.5" y2="140.2" stroke="#5a6472" stroke-width="0.5" stroke-dasharray="0.7 0.9"/>
<line x1="643.8" y1="149.6" x2="655.5" y2="149.6" stroke="#5a6472" stroke-width="0.5" stroke-dasharray="0.7 0.9"/>
<line x1="643.8" y1="159.0" x2="655.5" y2="159.0" stroke="#5a6472" stroke-width="0.5" stroke-dasharray="0.7 0.9"/>
<line x1="643.8" y1="168.4" x2="655.5" y2="168.4" stroke="#5a6472" stroke-width="0.5" stroke-dasharray="0.7 0.9"/>
<line x1="643.8" y1="177.8" x2="655.5" y2="177.8" stroke="#5a6472" stroke-width="0.5" stroke-dasharray="0.7 0.9"/>
<line x1="643.8" y1="187.2" x2="655.5" y2="187.2" stroke="#5a6472" stroke-width="0.5" stroke-dasharray="0.7 0.9"/>
<line x1="643.8" y1="196.60000000000002" x2="655.5" y2="196.60000000000002" stroke="#5a6472" stroke-width="0.5" stroke-dasharray="0.7 0.9"/>
<line x1="643.8" y1="206.0" x2="655.5" y2="206.0" stroke="#5a6472" stroke-width="0.5" stroke-dasharray="0.7 0.9"/>
<line x1="643.8" y1="215.4" x2="655.5" y2="215.4" stroke="#5a6472" stroke-width="0.5" stroke-dasharray="0.7 0.9"/>
<line x1="643.8" y1="328.20000000000005" x2="655.5" y2="328.20000000000005" stroke="#5a6472" stroke-width="0.5" stroke-dasharray="0.7 0.9"/>
<line x1="643.8" y1="337.6" x2="655.5" y2="337.6" stroke="#5a6472" stroke-width="0.5" stroke-dasharray="0.7 0.9"/>
<line x1="643.8" y1="347.0" x2="655.5" y2="347.0" stroke="#5a6472" stroke-width="0.5" stroke-dasharray="0.7 0.9"/>
<line x1="643.8" y1="356.4" x2="655.5" y2="356.4" stroke="#5a6472" stroke-width="0.5" stroke-dasharray="0.7 0.9"/>
<line x1="643.8" y1="365.8" x2="655.5" y2="365.8" stroke="#5a6472" stroke-width="0.5" stroke-dasharray="0.7 0.9"/>
<line x1="643.8" y1="375.2" x2="655.5" y2="375.2" stroke="#5a6472" stroke-width="0.5" stroke-dasharray="0.7 0.9"/>
<line x1="634.5" y1="112.0" x2="638.0999999999999" y2="112.0" stroke="#dfe2e6" stroke-width="0.8" />
<circle cx="646" cy="112.0" r="3.6" fill="none" stroke="#eef0f3" stroke-width="0.8" stroke-dasharray="2 0.8"/><circle cx="646" cy="112.0" r="1.8" fill="#eef0f3"/>
<text x="652" y="114.1" font-size="6" fill="#f2f4f6" textLength="25" lengthAdjust="spacingAndGlyphs" stroke="#f2f4f6" stroke-width="0.16" >Vistas (Fe)</text>
<path d="M743.9,112.3 L745.7,110.3 L747.5,112.3" fill="none" stroke="#c9cdd3" stroke-width="0.8" />
<line x1="641.8000000000001" y1="121.4" x2="645.4" y2="121.4" stroke="#dfe2e6" stroke-width="0.8" />
<text x="649.7" y="123.5" font-size="6" fill="#f2f4f6" textLength="76.5" lengthAdjust="spacingAndGlyphs" stroke="#f2f4f6" stroke-width="0.16" >Plantas de piso (Enlarged Plan)</text>
<line x1="641.8000000000001" y1="224.8" x2="645.4" y2="224.8" stroke="#dfe2e6" stroke-width="0.8" />
<line x1="643.6" y1="223.0" x2="643.6" y2="226.60000000000002" stroke="#dfe2e6" stroke-width="0.8" />
<text x="649.7" y="226.9" font-size="6" fill="#f2f4f6" textLength="68" lengthAdjust="spacingAndGlyphs" stroke="#f2f4f6" stroke-width="0.16" >Plantas de piso (Floor Plan)</text>
<line x1="641.8000000000001" y1="234.2" x2="645.4" y2="234.2" stroke="#dfe2e6" stroke-width="0.8" />
<line x1="643.6" y1="232.39999999999998" x2="643.6" y2="236.0" stroke="#dfe2e6" stroke-width="0.8" />
<text x="649.7" y="236.29999999999998" font-size="6" fill="#f2f4f6" textLength="79" lengthAdjust="spacingAndGlyphs" stroke="#f2f4f6" stroke-width="0.16" >Plantas de piso (Life Safety Plan)</text>
<line x1="641.8000000000001" y1="243.6" x2="645.4" y2="243.6" stroke="#dfe2e6" stroke-width="0.8" />
<line x1="643.6" y1="241.79999999999998" x2="643.6" y2="245.4" stroke="#dfe2e6" stroke-width="0.8" />
<text x="649.7" y="245.7" font-size="6" fill="#f2f4f6" textLength="78.5" lengthAdjust="spacingAndGlyphs" stroke="#f2f4f6" stroke-width="0.16" >Plantas de piso (Schematic Plan)</text>
<line x1="641.8000000000001" y1="253.0" x2="645.4" y2="253.0" stroke="#dfe2e6" stroke-width="0.8" />
<line x1="643.6" y1="251.2" x2="643.6" y2="254.8" stroke="#dfe2e6" stroke-width="0.8" />
<text x="649.7" y="255.1" font-size="6" fill="#f2f4f6" textLength="64" lengthAdjust="spacingAndGlyphs" stroke="#f2f4f6" stroke-width="0.16" >Plantas de piso (Site Plan)</text>
<line x1="641.8000000000001" y1="262.4" x2="645.4" y2="262.4" stroke="#dfe2e6" stroke-width="0.8" />
<line x1="643.6" y1="260.59999999999997" x2="643.6" y2="264.2" stroke="#dfe2e6" stroke-width="0.8" />
<text x="649.7" y="264.5" font-size="6" fill="#f2f4f6" textLength="62.5" lengthAdjust="spacingAndGlyphs" stroke="#f2f4f6" stroke-width="0.16" >Plantas de piso (Working)</text>
<line x1="641.8000000000001" y1="271.8" x2="645.4" y2="271.8" stroke="#dfe2e6" stroke-width="0.8" />
<line x1="643.6" y1="270.0" x2="643.6" y2="273.6" stroke="#dfe2e6" stroke-width="0.8" />
<text x="649.7" y="273.90000000000003" font-size="6" fill="#f2f4f6" textLength="92.5" lengthAdjust="spacingAndGlyphs" stroke="#f2f4f6" stroke-width="0.16" >Plantas de piso (Working Dimensions</text>
<line x1="641.8000000000001" y1="281.20000000000005" x2="645.4" y2="281.20000000000005" stroke="#dfe2e6" stroke-width="0.8" />
<line x1="643.6" y1="279.40000000000003" x2="643.6" y2="283.00000000000006" stroke="#dfe2e6" stroke-width="0.8" />
<text x="649.7" y="283.30000000000007" font-size="6" fill="#f2f4f6" textLength="73" lengthAdjust="spacingAndGlyphs" stroke="#f2f4f6" stroke-width="0.16" >Plantas de forro (Ceiling Plan)</text>
<line x1="641.8000000000001" y1="290.6" x2="645.4" y2="290.6" stroke="#dfe2e6" stroke-width="0.8" />
<line x1="643.6" y1="288.8" x2="643.6" y2="292.40000000000003" stroke="#dfe2e6" stroke-width="0.8" />
<text x="649.7" y="292.70000000000005" font-size="6" fill="#f2f4f6" textLength="65.5" lengthAdjust="spacingAndGlyphs" stroke="#f2f4f6" stroke-width="0.16" >Plantas de forro (Working)</text>
<line x1="641.8000000000001" y1="300.0" x2="645.4" y2="300.0" stroke="#dfe2e6" stroke-width="0.8" />
<line x1="643.6" y1="298.2" x2="643.6" y2="301.8" stroke="#dfe2e6" stroke-width="0.8" />
<text x="649.7" y="302.1" font-size="6" fill="#f2f4f6" textLength="69" lengthAdjust="spacingAndGlyphs" stroke="#f2f4f6" stroke-width="0.16" >Vistas 3D (3D Coordination)</text>
<line x1="641.8000000000001" y1="309.4" x2="645.4" y2="309.4" stroke="#dfe2e6" stroke-width="0.8" />
<line x1="643.6" y1="307.59999999999997" x2="643.6" y2="311.2" stroke="#dfe2e6" stroke-width="0.8" />
<text x="649.7" y="311.5" font-size="6" fill="#f2f4f6" textLength="48" lengthAdjust="spacingAndGlyphs" stroke="#f2f4f6" stroke-width="0.16" >Vistas 3D (3D View)</text>
<line x1="641.8000000000001" y1="318.8" x2="645.4" y2="318.8" stroke="#dfe2e6" stroke-width="0.8" />
<text x="649.7" y="320.90000000000003" font-size="6" fill="#f2f4f6" textLength="73.5" lengthAdjust="spacingAndGlyphs" stroke="#f2f4f6" stroke-width="0.16" >Elevações (Building Elevation)</text>
<line x1="641.8000000000001" y1="384.6" x2="645.4" y2="384.6" stroke="#dfe2e6" stroke-width="0.8" />
<line x1="643.6" y1="382.8" x2="643.6" y2="386.40000000000003" stroke="#dfe2e6" stroke-width="0.8" />
<text x="649.7" y="386.70000000000005" font-size="6" fill="#f2f4f6" textLength="71" lengthAdjust="spacingAndGlyphs" stroke="#f2f4f6" stroke-width="0.16" >Elevações (Interior Elevation)</text>
<rect x="657.3" y="127.30000000000001" width="7" height="7" fill="#3cc0f0" stroke="#eef0f3" stroke-width="0.8"/>
<text x="666.5" y="132.9" font-size="6" fill="#f2f4f6" textLength="43" lengthAdjust="spacingAndGlyphs" stroke="#f2f4f6" stroke-width="0.16" >Café Kitchen Plan</text>
<rect x="657.3" y="136.7" width="7" height="7" fill="#3cc0f0" stroke="#eef0f3" stroke-width="0.8"/>
<text x="666.5" y="142.29999999999998" font-size="6" fill="#f2f4f6" textLength="75.5" lengthAdjust="spacingAndGlyphs" stroke="#f2f4f6" stroke-width="0.16" >Enlarged Residential Lobby Pla</text>
<rect x="657.3" y="146.1" width="7" height="7" fill="#3cc0f0" stroke="#eef0f3" stroke-width="0.8"/>
<text x="666.5" y="151.7" font-size="6" fill="#f2f4f6" textLength="64.5" lengthAdjust="spacingAndGlyphs" stroke="#f2f4f6" stroke-width="0.16" >Typical Public Toilet Room</text>
<rect x="657.3" y="155.5" width="7" height="7" fill="#3cc0f0" stroke="#eef0f3" stroke-width="0.8"/>
<text x="666.5" y="161.1" font-size="6" fill="#f2f4f6" textLength="39" lengthAdjust="spacingAndGlyphs" stroke="#f2f4f6" stroke-width="0.16" >Mezzanine Plan</text>
<rect x="657.3" y="164.9" width="7" height="7" fill="#3cc0f0" stroke="#eef0f3" stroke-width="0.8"/>
<text x="666.5" y="170.5" font-size="6" fill="#f2f4f6" textLength="67.5" lengthAdjust="spacingAndGlyphs" stroke="#f2f4f6" stroke-width="0.16" >Standard Live_Work Core A</text>
<rect x="657.3" y="174.3" width="7" height="7" fill="#3cc0f0" stroke="#eef0f3" stroke-width="0.8"/>
<text x="666.5" y="179.9" font-size="6" fill="#f2f4f6" textLength="71" lengthAdjust="spacingAndGlyphs" font-weight="bold" stroke="#f2f4f6" stroke-width="0.16" >Standard Live_Work Core B</text>
<rect x="657.3" y="183.7" width="7" height="7" fill="#3cc0f0" stroke="#eef0f3" stroke-width="0.8"/>
<text x="666.5" y="189.29999999999998" font-size="6" fill="#f2f4f6" textLength="61.5" lengthAdjust="spacingAndGlyphs" stroke="#f2f4f6" stroke-width="0.16" >Studio Live_Work Core A</text>
<rect x="657.3" y="193.10000000000002" width="7" height="7" fill="#3cc0f0" stroke="#eef0f3" stroke-width="0.8"/>
<text x="666.5" y="198.70000000000002" font-size="6" fill="#f2f4f6" textLength="61" lengthAdjust="spacingAndGlyphs" stroke="#f2f4f6" stroke-width="0.16" >Studio Live_Work Core B</text>
<rect x="657.3" y="202.5" width="7" height="7" fill="#3cc0f0" stroke="#eef0f3" stroke-width="0.8"/>
<text x="666.5" y="208.1" font-size="6" fill="#f2f4f6" textLength="75.5" lengthAdjust="spacingAndGlyphs" stroke="#f2f4f6" stroke-width="0.16" >Studio Two Story Live_Work Cc</text>
<rect x="657.3" y="211.9" width="7" height="7" fill="#3cc0f0" stroke="#eef0f3" stroke-width="0.8"/>
<text x="666.5" y="217.5" font-size="6" fill="#f2f4f6" textLength="71.5" lengthAdjust="spacingAndGlyphs" stroke="#f2f4f6" stroke-width="0.16" >Green Roof Materials Legend</text>
<rect x="657.3" y="324.70000000000005" width="7" height="7" fill="#3cc0f0" stroke="#eef0f3" stroke-width="0.8"/>
<text x="666.5" y="330.30000000000007" font-size="6" fill="#f2f4f6" textLength="10" lengthAdjust="spacingAndGlyphs" stroke="#f2f4f6" stroke-width="0.16" >East</text>
<rect x="657.3" y="334.1" width="7" height="7" fill="#3cc0f0" stroke="#eef0f3" stroke-width="0.8"/>
<text x="666.5" y="339.70000000000005" font-size="6" fill="#f2f4f6" textLength="35" lengthAdjust="spacingAndGlyphs" stroke="#f2f4f6" stroke-width="0.16" >Existing North</text>
<rect x="657.3" y="343.5" width="7" height="7" fill="#3cc0f0" stroke="#eef0f3" stroke-width="0.8"/>
<text x="666.5" y="349.1" font-size="6" fill="#f2f4f6" textLength="35" lengthAdjust="spacingAndGlyphs" stroke="#f2f4f6" stroke-width="0.16" >Existing South</text>
<rect x="657.3" y="352.9" width="7" height="7" fill="#3cc0f0" stroke="#eef0f3" stroke-width="0.8"/>
<text x="666.5" y="358.5" font-size="6" fill="#f2f4f6" textLength="14.5" lengthAdjust="spacingAndGlyphs" stroke="#f2f4f6" stroke-width="0.16" >North</text>
<rect x="657.3" y="362.3" width="7" height="7" fill="#3cc0f0" stroke="#eef0f3" stroke-width="0.8"/>
<text x="666.5" y="367.90000000000003" font-size="6" fill="#f2f4f6" textLength="14.5" lengthAdjust="spacingAndGlyphs" stroke="#f2f4f6" stroke-width="0.16" >South</text>
<rect x="657.3" y="371.7" width="7" height="7" fill="#3cc0f0" stroke="#eef0f3" stroke-width="0.8"/>
<text x="666.5" y="377.3" font-size="6" fill="#f2f4f6" textLength="41" lengthAdjust="spacingAndGlyphs" stroke="#f2f4f6" stroke-width="0.16" >South - Block 39</text>
<rect x="742" y="117" width="8" height="265" fill="#3b4453" />
<rect x="745.6" y="118" width="1.6" height="165" fill="#6e7a8c" />
<path d="M743.9,385.7 L745.7,387.7 L747.5,385.7" fill="none" stroke="#c9cdd3" stroke-width="0.8" />
<rect x="176.6" y="383" width="452" height="1" fill="#1e2836" />
<rect x="177" y="384" width="451.5" height="7" fill="#273345" />
<rect x="0" y="390.8" width="750" height="13.2" fill="#333d4c" />
<text x="183.2" y="389.3" font-size="5.6" fill="#e8ebef" textLength="24.8" lengthAdjust="spacingAndGlyphs" stroke="#e8ebef" stroke-width="0.16" >1/2&quot; = 1&#x27;-0&quot;</text>
<rect x="216.2" y="384.9" width="7" height="4.6" fill="#e8ebef" />
<rect x="217.89999999999998" y="386.2" width="3.6" height="2" fill="#59626f" />
<rect x="229" y="385.7" width="4.5" height="4" fill="none" stroke="#e8ebef" stroke-width="0.7"/>
<rect x="230.7" y="384.2" width="4.5" height="4" fill="none" stroke="#e8ebef" stroke-width="0.7"/>
<circle cx="243.7" cy="386.4" r="1.7" fill="#e0b23c"/><circle cx="246.2" cy="388.8" r="1.3" fill="#3cc0f0"/>
<ellipse cx="255.89999999999998" cy="386.4" rx="3" ry="2" fill="#aeb4bc"/><ellipse cx="257.59999999999997" cy="388.4" rx="2.4" ry="1.5" fill="#7d8590"/>
<path d="M265,389.7 L265,385.2 L270.5,385.2 M267,389.7 L270.5,389.7" fill="none" stroke="#e8ebef" stroke-width="0.8" />
<circle cx="269.8" cy="388.8" r="1.2" fill="#3cc0f0"/>
<path d="M277.5,389.7 L277.5,385.2 L283.0,385.2 M279.5,389.7 L283.0,389.7" fill="none" stroke="#e8ebef" stroke-width="0.8" />
<circle cx="282.3" cy="388.8" r="1.2" fill="#3cc0f0"/>
<path d="M290,386.7 Q293,383.7 296,386.7 M291,388.7 L295,385.7" fill="none" stroke="#aeb4bc" stroke-width="0.7" />
<circle cx="305" cy="386.4" r="1.8" fill="#3cc0f0"/>
<rect x="304.3" y="388.2" width="1.4" height="1.6" fill="#3cc0f0" />
<rect x="314" y="384.7" width="4" height="4" fill="#e8ebef" />
<rect x="316.5" y="386.7" width="3.5" height="3.2" fill="#aeb4bc" />
<rect x="326" y="385.2" width="2.6" height="4.5" fill="none" stroke="#aeb4bc" stroke-width="0.7"/>
<rect x="329.5" y="385.2" width="2.6" height="4.5" fill="none" stroke="#aeb4bc" stroke-width="0.7"/>
<line x1="327.5" y1="384.2" x2="330.5" y2="384.2" stroke="#aeb4bc" stroke-width="0.7" />
<rect x="338.5" y="385.0" width="6" height="4.4" fill="none" stroke="#e8ebef" stroke-width="0.7" stroke-dasharray="1.4 0.8"/>
<circle cx="343.7" cy="389.0" r="1.2" fill="#3cc0f0"/>
<path d="M352.4,385.5 L350.6,387.2 L352.4,388.9" fill="none" stroke="#c9cdd3" stroke-width="0.7" />
<rect x="480" y="386.4" width="8.5" height="1.4" fill="#5f6b7b" />
<path d="M616.6,385.6 L618.6,387.4 L616.6,389.2" fill="none" stroke="#c9cdd3" stroke-width="0.8" />
<rect x="621.3" y="91" width="7.2" height="292.6" fill="#1e2836" />
<path d="M623.2,96 L625,94 L626.8,96" fill="none" stroke="#c9cdd3" stroke-width="0.8" />
<path d="M623.2,378.3 L625,380.3 L626.8,378.3" fill="none" stroke="#c9cdd3" stroke-width="0.8" />
<rect x="624.3" y="232.5" width="1.5" height="8.5" fill="#59626f" />
<path d="M624.5,389 L627.5,386 M626,389 L627.5,387.5" fill="none" stroke="#59626f" stroke-width="0.5" />
<text x="0.7" y="400.5" font-size="6" fill="#eef0f3" textLength="209" lengthAdjust="spacingAndGlyphs" stroke="#eef0f3" stroke-width="0.16" >Clique para selecionar, TAB para alternativas, CTRL adiciona, SHIFT cancela a seleção.</text>
<circle cx="266.3" cy="397.2" r="1.8" fill="#3cc0f0"/><circle cx="269" cy="396.2" r="1.6" fill="#e0b23c"/><circle cx="268" cy="399.8" r="1.9" fill="#56b35a"/><circle cx="265.8" cy="399.8" r="1.4" fill="#eef0f3"/>
<path d="M367.2,398 L368.6,399.4 L370,398" fill="none" stroke="#8e96a1" stroke-width="0.6" />
<path d="M377.5,401 L379,396 L381.5,396 L382.5,401" fill="none" stroke="#c9cdd3" stroke-width="0.8" />
<circle cx="379" cy="395.5" r="1.2" fill="#c9cdd3"/>
<text x="383.8" y="401" font-size="5" fill="#c9cdd3" stroke="#c9cdd3" stroke-width="0.16" >:0</text>
<rect x="399.5" y="395.5" width="6.5" height="5.5" fill="#dfe2e6" />
<path d="M399.5,397.5 L406,397.5 M399.5,399.3 L406,399.3" fill="none" stroke="#59626f" stroke-width="0.5" />
<rect x="414" y="395.3" width="5.5" height="4.2" fill="#8e96a1" />
<path d="M415,399.5 L415,401.5 L417,399.5" fill="#8e96a1" stroke="none" stroke-width="1" />
<text x="425" y="401" font-size="6" fill="#eef0f3" textLength="42.5" lengthAdjust="spacingAndGlyphs" stroke="#eef0f3" stroke-width="0.16" >Modelo principal</text>
<path d="M516,398 L517.3,399.4 L518.6,398" fill="none" stroke="#aeb4bc" stroke-width="0.6" />
<rect x="524" y="396" width="4.6" height="4.6" fill="#eef0f3" />
<path d="M524.8,398.3 L525.9,399.5 L527.8,396.8" fill="none" stroke="#1f2937" stroke-width="0.8" />
<text x="529.7" y="401" font-size="6" fill="#eef0f3" textLength="36.5" lengthAdjust="spacingAndGlyphs" stroke="#eef0f3" stroke-width="0.16" >Excluir opções</text>
<path d="M634.0,395 L634.0,400 L635.2,399 L636.2,401.2 L637.2,400.7 L636.2,398.6 L637.8,398.6 Z" fill="#eef0f3" stroke="none" stroke-width="1" />
<circle cx="633.7" cy="396.5" r="1.5" fill="#c9a27a"/><circle cx="636.7" cy="395.5" r="1.2" fill="#d9492f"/>
<path d="M646.0,395 L646.0,400 L647.2,399 L648.2,401.2 L649.2,400.7 L648.2,398.6 L649.8,398.6 Z" fill="#eef0f3" stroke="none" stroke-width="1" />
<circle cx="645.7" cy="396.5" r="1.5" fill="#3aa0e0"/><circle cx="648.7" cy="395.5" r="1.2" fill="#d9492f"/>
<path d="M658.0,395 L658.0,400 L659.2,399 L660.2,401.2 L661.2,400.7 L660.2,398.6 L661.8,398.6 Z" fill="#eef0f3" stroke="none" stroke-width="1" />
<path d="M670.0,395 L670.0,400 L671.2,399 L672.2,401.2 L673.2,400.7 L672.2,398.6 L673.8,398.6 Z" fill="#eef0f3" stroke="none" stroke-width="1" />
<circle cx="669.7" cy="396.5" r="1.5" fill="#3aa0e0"/><circle cx="672.7" cy="395.5" r="1.2" fill="#d9492f"/>
<path d="M682.0,395 L682.0,400 L683.2,399 L684.2,401.2 L685.2,400.7 L684.2,398.6 L685.8,398.6 Z" fill="#eef0f3" stroke="none" stroke-width="1" />
<circle cx="695.2" cy="398" r="2.6" fill="none" stroke="#59626f" stroke-width="0.8" stroke-dasharray="1 0.7"/>
<path d="M703.5,395 L710,395 L707.6,398 L707.6,401.3 L705.9,400.3 L705.9,398 Z" fill="#eef0f3" stroke="none" stroke-width="1" />
<text x="711.5" y="401" font-size="5" fill="#eef0f3" stroke="#eef0f3" stroke-width="0.16" >:0</text>
</svg>
</body></html>
